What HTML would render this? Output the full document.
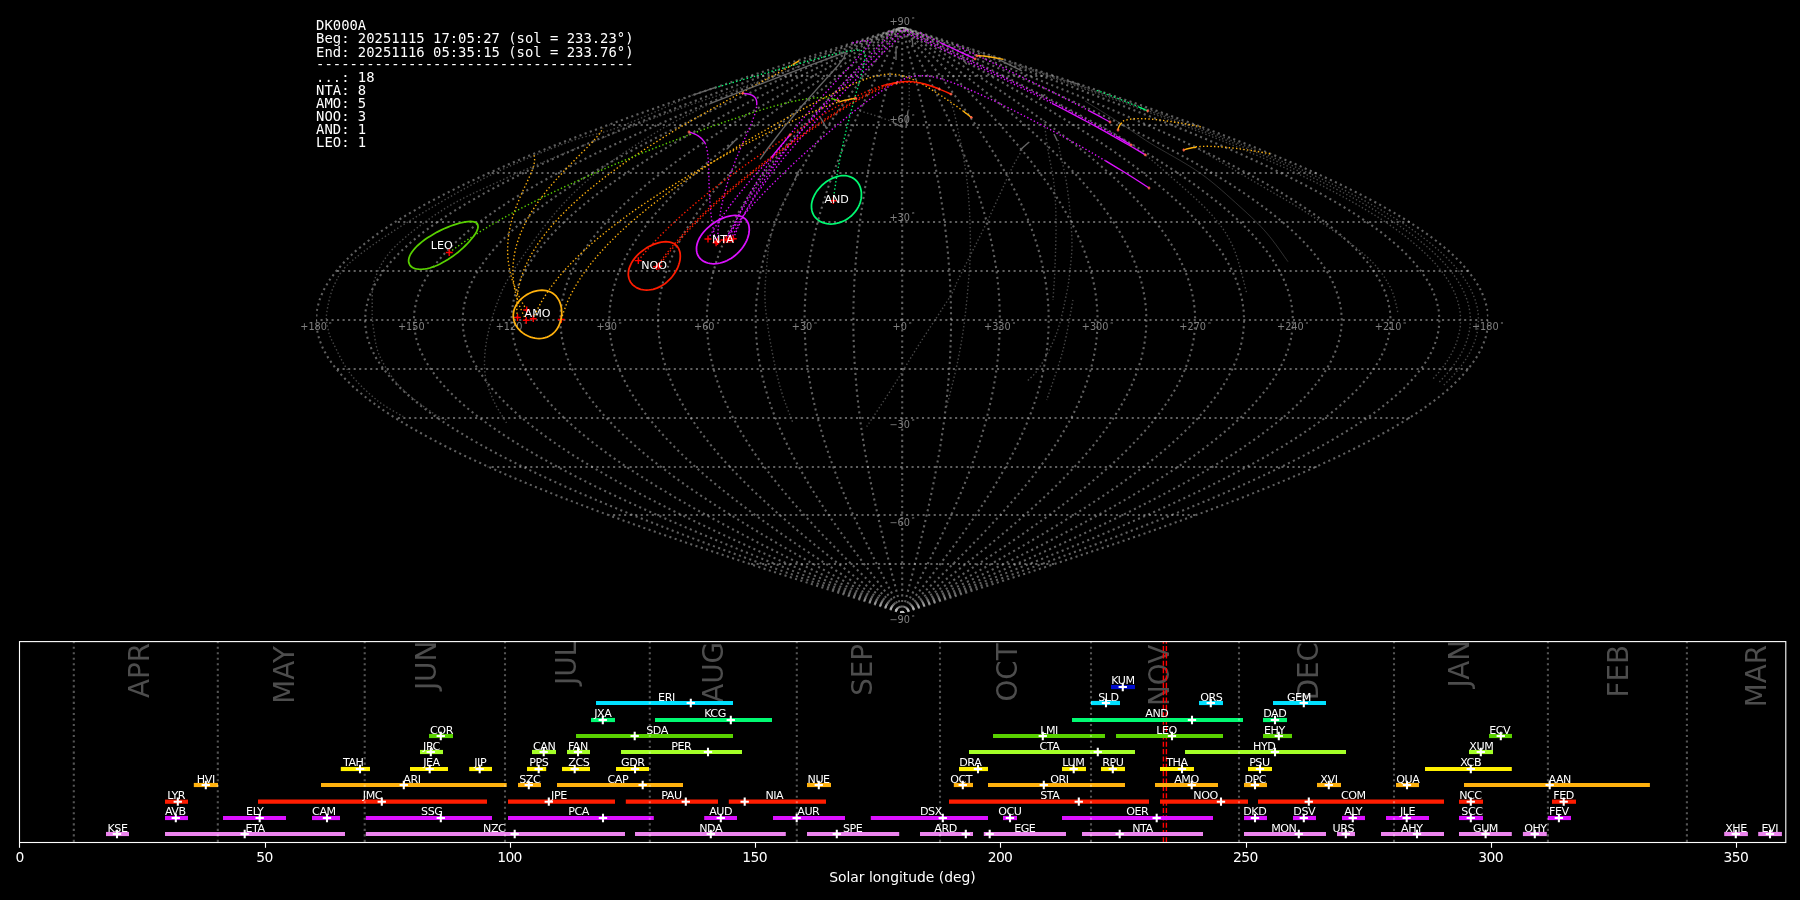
<!DOCTYPE html>
<html><head><meta charset="utf-8"><title>DK000A shower association</title>
<style>html,body{margin:0;padding:0;background:#000;overflow:hidden}svg{display:block;will-change:transform}</style></head>
<body>
<svg width="1800" height="900" viewBox="0 0 1800 900">
<rect width="1800" height="900" fill="#000"/>
<defs><clipPath id="mapclip"><rect x="316.12" y="26.96" width="1172.16" height="586.08"/></clipPath></defs>
<g clip-path="url(#mapclip)">
<g fill="none" stroke="#c0c0c0" stroke-opacity="0.5" stroke-width="2.083" stroke-dasharray="2.083 3.437">
<path d="M902.2,613.0 L871.5,603.3 L840.9,593.5 L810.5,583.7 L780.3,574.0 L750.5,564.2 L721.1,554.4 L692.2,544.7 L663.8,534.9 L636.1,525.1 L609.2,515.4 L583.0,505.6 L557.7,495.8 L533.4,486.1 L510.0,476.3 L487.8,466.5 L466.7,456.8 L446.7,447.0 L428.1,437.2 L410.7,427.4 L394.6,417.7 L380.0,407.9 L366.8,398.1 L355.0,388.4 L344.8,378.6 L336.1,368.8 L328.9,359.1 L323.3,349.3 L319.3,339.5 L316.9,329.8 L316.1,320.0 L316.9,310.2 L319.3,300.5 L323.3,290.7 L328.9,280.9 L336.1,271.2 L344.8,261.4 L355.0,251.6 L366.8,241.9 L380.0,232.1 L394.6,222.3 L410.7,212.6 L428.1,202.8 L446.7,193.0 L466.7,183.2 L487.8,173.5 L510.0,163.7 L533.4,153.9 L557.7,144.2 L583.0,134.4 L609.2,124.6 L636.1,114.9 L663.8,105.1 L692.2,95.3 L721.1,85.6 L750.5,75.8 L780.3,66.0 L810.5,56.3 L840.9,46.5 L871.5,36.7 L902.2,27.0"/>
<path d="M902.2,613.0 L874.1,603.3 L846.0,593.5 L818.2,583.7 L790.5,574.0 L763.2,564.2 L736.2,554.4 L709.7,544.7 L683.7,534.9 L658.3,525.1 L633.6,515.4 L609.6,505.6 L586.4,495.8 L564.1,486.1 L542.7,476.3 L522.3,466.5 L503.0,456.8 L484.7,447.0 L467.6,437.2 L451.6,427.4 L436.9,417.7 L423.5,407.9 L411.4,398.1 L400.6,388.4 L391.3,378.6 L383.3,368.8 L376.7,359.1 L371.6,349.3 L367.9,339.5 L365.7,329.8 L365.0,320.0 L365.7,310.2 L367.9,300.5 L371.6,290.7 L376.7,280.9 L383.3,271.2 L391.3,261.4 L400.6,251.6 L411.4,241.9 L423.5,232.1 L436.9,222.3 L451.6,212.6 L467.6,202.8 L484.7,193.0 L503.0,183.2 L522.3,173.5 L542.7,163.7 L564.1,153.9 L586.4,144.2 L609.6,134.4 L633.6,124.6 L658.3,114.9 L683.7,105.1 L709.7,95.3 L736.2,85.6 L763.2,75.8 L790.5,66.0 L818.2,56.3 L846.0,46.5 L874.1,36.7 L902.2,27.0"/>
<path d="M902.2,613.0 L876.6,603.3 L851.1,593.5 L825.8,583.7 L800.7,574.0 L775.8,564.2 L751.3,554.4 L727.2,544.7 L703.5,534.9 L680.5,525.1 L658.0,515.4 L636.2,505.6 L615.1,495.8 L594.8,486.1 L575.4,476.3 L556.8,466.5 L539.2,456.8 L522.6,447.0 L507.1,437.2 L492.6,427.4 L479.2,417.7 L467.0,407.9 L456.0,398.1 L446.2,388.4 L437.7,378.6 L430.4,368.8 L424.5,359.1 L419.8,349.3 L416.5,339.5 L414.5,329.8 L413.8,320.0 L414.5,310.2 L416.5,300.5 L419.8,290.7 L424.5,280.9 L430.4,271.2 L437.7,261.4 L446.2,251.6 L456.0,241.9 L467.0,232.1 L479.2,222.3 L492.6,212.6 L507.1,202.8 L522.6,193.0 L539.2,183.2 L556.8,173.5 L575.4,163.7 L594.8,153.9 L615.1,144.2 L636.2,134.4 L658.0,124.6 L680.5,114.9 L703.5,105.1 L727.2,95.3 L751.3,85.6 L775.8,75.8 L800.7,66.0 L825.8,56.3 L851.1,46.5 L876.6,36.7 L902.2,27.0"/>
<path d="M902.2,613.0 L879.2,603.3 L856.3,593.5 L833.4,583.7 L810.8,574.0 L788.4,564.2 L766.4,554.4 L744.7,544.7 L723.4,534.9 L702.6,525.1 L682.4,515.4 L662.8,505.6 L643.8,495.8 L625.6,486.1 L608.1,476.3 L591.4,466.5 L575.5,456.8 L560.6,447.0 L546.6,437.2 L533.6,427.4 L521.5,417.7 L510.5,407.9 L500.6,398.1 L491.8,388.4 L484.2,378.6 L477.6,368.8 L472.2,359.1 L468.1,349.3 L465.0,339.5 L463.2,329.8 L462.6,320.0 L463.2,310.2 L465.0,300.5 L468.1,290.7 L472.2,280.9 L477.6,271.2 L484.2,261.4 L491.8,251.6 L500.6,241.9 L510.5,232.1 L521.5,222.3 L533.6,212.6 L546.6,202.8 L560.6,193.0 L575.5,183.2 L591.4,173.5 L608.1,163.7 L625.6,153.9 L643.8,144.2 L662.8,134.4 L682.4,124.6 L702.6,114.9 L723.4,105.1 L744.7,95.3 L766.4,85.6 L788.4,75.8 L810.8,66.0 L833.4,56.3 L856.3,46.5 L879.2,36.7 L902.2,27.0"/>
<path d="M902.2,613.0 L881.8,603.3 L861.4,593.5 L841.1,583.7 L821.0,574.0 L801.1,564.2 L781.5,554.4 L762.2,544.7 L743.3,534.9 L724.8,525.1 L706.8,515.4 L689.4,505.6 L672.5,495.8 L656.3,486.1 L640.8,476.3 L625.9,466.5 L611.8,456.8 L598.6,447.0 L586.1,437.2 L574.5,427.4 L563.8,417.7 L554.1,407.9 L545.3,398.1 L537.4,388.4 L530.6,378.6 L524.8,368.8 L520.0,359.1 L516.3,349.3 L513.6,339.5 L512.0,329.8 L511.5,320.0 L512.0,310.2 L513.6,300.5 L516.3,290.7 L520.0,280.9 L524.8,271.2 L530.6,261.4 L537.4,251.6 L545.3,241.9 L554.1,232.1 L563.8,222.3 L574.5,212.6 L586.1,202.8 L598.6,193.0 L611.8,183.2 L625.9,173.5 L640.8,163.7 L656.3,153.9 L672.5,144.2 L689.4,134.4 L706.8,124.6 L724.8,114.9 L743.3,105.1 L762.2,95.3 L781.5,85.6 L801.1,75.8 L821.0,66.0 L841.1,56.3 L861.4,46.5 L881.8,36.7 L902.2,27.0"/>
<path d="M902.2,613.0 L884.3,603.3 L866.5,593.5 L848.7,583.7 L831.1,574.0 L813.7,564.2 L796.6,554.4 L779.7,544.7 L763.1,534.9 L747.0,525.1 L731.3,515.4 L716.0,505.6 L701.2,495.8 L687.0,486.1 L673.4,476.3 L660.5,466.5 L648.1,456.8 L636.5,447.0 L625.6,437.2 L615.5,427.4 L606.1,417.7 L597.6,407.9 L589.9,398.1 L583.0,388.4 L577.1,378.6 L572.0,368.8 L567.8,359.1 L564.5,349.3 L562.2,339.5 L560.8,329.8 L560.3,320.0 L560.8,310.2 L562.2,300.5 L564.5,290.7 L567.8,280.9 L572.0,271.2 L577.1,261.4 L583.0,251.6 L589.9,241.9 L597.6,232.1 L606.1,222.3 L615.5,212.6 L625.6,202.8 L636.5,193.0 L648.1,183.2 L660.5,173.5 L673.4,163.7 L687.0,153.9 L701.2,144.2 L716.0,134.4 L731.3,124.6 L747.0,114.9 L763.1,105.1 L779.7,95.3 L796.6,85.6 L813.7,75.8 L831.1,66.0 L848.7,56.3 L866.5,46.5 L884.3,36.7 L902.2,27.0"/>
<path d="M902.2,613.0 L886.9,603.3 L871.6,593.5 L856.4,583.7 L841.3,574.0 L826.4,564.2 L811.6,554.4 L797.2,544.7 L783.0,534.9 L769.2,525.1 L755.7,515.4 L742.6,505.6 L730.0,495.8 L717.8,486.1 L706.1,476.3 L695.0,466.5 L684.4,456.8 L674.5,447.0 L665.1,437.2 L656.4,427.4 L648.4,417.7 L641.1,407.9 L634.5,398.1 L628.6,388.4 L623.5,378.6 L619.1,368.8 L615.6,359.1 L612.8,349.3 L610.8,339.5 L609.6,329.8 L609.2,320.0 L609.6,310.2 L610.8,300.5 L612.8,290.7 L615.6,280.9 L619.1,271.2 L623.5,261.4 L628.6,251.6 L634.5,241.9 L641.1,232.1 L648.4,222.3 L656.4,212.6 L665.1,202.8 L674.5,193.0 L684.4,183.2 L695.0,173.5 L706.1,163.7 L717.8,153.9 L730.0,144.2 L742.6,134.4 L755.7,124.6 L769.2,114.9 L783.0,105.1 L797.2,95.3 L811.6,85.6 L826.4,75.8 L841.3,66.0 L856.4,56.3 L871.6,46.5 L886.9,36.7 L902.2,27.0"/>
<path d="M902.2,613.0 L889.4,603.3 L876.7,593.5 L864.0,583.7 L851.4,574.0 L839.0,564.2 L826.7,554.4 L814.7,544.7 L802.9,534.9 L791.3,525.1 L780.1,515.4 L769.2,505.6 L758.7,495.8 L748.5,486.1 L738.8,476.3 L729.5,466.5 L720.7,456.8 L712.4,447.0 L704.6,437.2 L697.4,427.4 L690.7,417.7 L684.6,407.9 L679.1,398.1 L674.2,388.4 L670.0,378.6 L666.3,368.8 L663.3,359.1 L661.0,349.3 L659.3,339.5 L658.3,329.8 L658.0,320.0 L658.3,310.2 L659.3,300.5 L661.0,290.7 L663.3,280.9 L666.3,271.2 L670.0,261.4 L674.2,251.6 L679.1,241.9 L684.6,232.1 L690.7,222.3 L697.4,212.6 L704.6,202.8 L712.4,193.0 L720.7,183.2 L729.5,173.5 L738.8,163.7 L748.5,153.9 L758.7,144.2 L769.2,134.4 L780.1,124.6 L791.3,114.9 L802.9,105.1 L814.7,95.3 L826.7,85.6 L839.0,75.8 L851.4,66.0 L864.0,56.3 L876.7,46.5 L889.4,36.7 L902.2,27.0"/>
<path d="M902.2,613.0 L892.0,603.3 L881.8,593.5 L871.6,583.7 L861.6,574.0 L851.6,564.2 L841.8,554.4 L832.2,544.7 L822.7,534.9 L813.5,525.1 L804.5,515.4 L795.8,505.6 L787.4,495.8 L779.3,486.1 L771.5,476.3 L764.1,466.5 L757.0,456.8 L750.4,447.0 L744.2,437.2 L738.4,427.4 L733.0,417.7 L728.1,407.9 L723.7,398.1 L719.8,388.4 L716.4,378.6 L713.5,368.8 L711.1,359.1 L709.2,349.3 L707.9,339.5 L707.1,329.8 L706.8,320.0 L707.1,310.2 L707.9,300.5 L709.2,290.7 L711.1,280.9 L713.5,271.2 L716.4,261.4 L719.8,251.6 L723.7,241.9 L728.1,232.1 L733.0,222.3 L738.4,212.6 L744.2,202.8 L750.4,193.0 L757.0,183.2 L764.1,173.5 L771.5,163.7 L779.3,153.9 L787.4,144.2 L795.8,134.4 L804.5,124.6 L813.5,114.9 L822.7,105.1 L832.2,95.3 L841.8,85.6 L851.6,75.8 L861.6,66.0 L871.6,56.3 L881.8,46.5 L892.0,36.7 L902.2,27.0"/>
<path d="M902.2,613.0 L894.5,603.3 L886.9,593.5 L879.3,583.7 L871.7,574.0 L864.3,564.2 L856.9,554.4 L849.7,544.7 L842.6,534.9 L835.7,525.1 L828.9,515.4 L822.4,505.6 L816.1,495.8 L810.0,486.1 L804.2,476.3 L798.6,466.5 L793.3,456.8 L788.3,447.0 L783.7,437.2 L779.3,427.4 L775.3,417.7 L771.6,407.9 L768.3,398.1 L765.4,388.4 L762.9,378.6 L760.7,368.8 L758.9,359.1 L757.5,349.3 L756.5,339.5 L755.9,329.8 L755.7,320.0 L755.9,310.2 L756.5,300.5 L757.5,290.7 L758.9,280.9 L760.7,271.2 L762.9,261.4 L765.4,251.6 L768.3,241.9 L771.6,232.1 L775.3,222.3 L779.3,212.6 L783.7,202.8 L788.3,193.0 L793.3,183.2 L798.6,173.5 L804.2,163.7 L810.0,153.9 L816.1,144.2 L822.4,134.4 L828.9,124.6 L835.7,114.9 L842.6,105.1 L849.7,95.3 L856.9,85.6 L864.3,75.8 L871.7,66.0 L879.3,56.3 L886.9,46.5 L894.5,36.7 L902.2,27.0"/>
<path d="M902.2,613.0 L897.1,603.3 L892.0,593.5 L886.9,583.7 L881.9,574.0 L876.9,564.2 L872.0,554.4 L867.2,544.7 L862.5,534.9 L857.9,525.1 L853.4,515.4 L849.0,505.6 L844.8,495.8 L840.7,486.1 L836.8,476.3 L833.1,466.5 L829.6,456.8 L826.3,447.0 L823.2,437.2 L820.3,427.4 L817.6,417.7 L815.2,407.9 L813.0,398.1 L811.0,388.4 L809.3,378.6 L807.8,368.8 L806.7,359.1 L805.7,349.3 L805.1,339.5 L804.7,329.8 L804.5,320.0 L804.7,310.2 L805.1,300.5 L805.7,290.7 L806.7,280.9 L807.8,271.2 L809.3,261.4 L811.0,251.6 L813.0,241.9 L815.2,232.1 L817.6,222.3 L820.3,212.6 L823.2,202.8 L826.3,193.0 L829.6,183.2 L833.1,173.5 L836.8,163.7 L840.7,153.9 L844.8,144.2 L849.0,134.4 L853.4,124.6 L857.9,114.9 L862.5,105.1 L867.2,95.3 L872.0,85.6 L876.9,75.8 L881.9,66.0 L886.9,56.3 L892.0,46.5 L897.1,36.7 L902.2,27.0"/>
<path d="M902.2,613.0 L899.6,603.3 L897.1,593.5 L894.6,583.7 L892.0,574.0 L889.6,564.2 L887.1,554.4 L884.7,544.7 L882.3,534.9 L880.0,525.1 L877.8,515.4 L875.6,505.6 L873.5,495.8 L871.5,486.1 L869.5,476.3 L867.7,466.5 L865.9,456.8 L864.2,447.0 L862.7,437.2 L861.2,427.4 L859.9,417.7 L858.7,407.9 L857.6,398.1 L856.6,388.4 L855.8,378.6 L855.0,368.8 L854.4,359.1 L854.0,349.3 L853.6,339.5 L853.4,329.8 L853.4,320.0 L853.4,310.2 L853.6,300.5 L854.0,290.7 L854.4,280.9 L855.0,271.2 L855.8,261.4 L856.6,251.6 L857.6,241.9 L858.7,232.1 L859.9,222.3 L861.2,212.6 L862.7,202.8 L864.2,193.0 L865.9,183.2 L867.7,173.5 L869.5,163.7 L871.5,153.9 L873.5,144.2 L875.6,134.4 L877.8,124.6 L880.0,114.9 L882.3,105.1 L884.7,95.3 L887.1,85.6 L889.6,75.8 L892.0,66.0 L894.6,56.3 L897.1,46.5 L899.6,36.7 L902.2,27.0"/>
<path d="M902.2,613.0 L902.2,603.3 L902.2,593.5 L902.2,583.7 L902.2,574.0 L902.2,564.2 L902.2,554.4 L902.2,544.7 L902.2,534.9 L902.2,525.1 L902.2,515.4 L902.2,505.6 L902.2,495.8 L902.2,486.1 L902.2,476.3 L902.2,466.5 L902.2,456.8 L902.2,447.0 L902.2,437.2 L902.2,427.4 L902.2,417.7 L902.2,407.9 L902.2,398.1 L902.2,388.4 L902.2,378.6 L902.2,368.8 L902.2,359.1 L902.2,349.3 L902.2,339.5 L902.2,329.8 L902.2,320.0 L902.2,310.2 L902.2,300.5 L902.2,290.7 L902.2,280.9 L902.2,271.2 L902.2,261.4 L902.2,251.6 L902.2,241.9 L902.2,232.1 L902.2,222.3 L902.2,212.6 L902.2,202.8 L902.2,193.0 L902.2,183.2 L902.2,173.5 L902.2,163.7 L902.2,153.9 L902.2,144.2 L902.2,134.4 L902.2,124.6 L902.2,114.9 L902.2,105.1 L902.2,95.3 L902.2,85.6 L902.2,75.8 L902.2,66.0 L902.2,56.3 L902.2,46.5 L902.2,36.7 L902.2,27.0"/>
<path d="M902.2,613.0 L904.8,603.3 L907.3,593.5 L909.8,583.7 L912.4,574.0 L914.8,564.2 L917.3,554.4 L919.7,544.7 L922.1,534.9 L924.4,525.1 L926.6,515.4 L928.8,505.6 L930.9,495.8 L932.9,486.1 L934.9,476.3 L936.7,466.5 L938.5,456.8 L940.2,447.0 L941.7,437.2 L943.2,427.4 L944.5,417.7 L945.7,407.9 L946.8,398.1 L947.8,388.4 L948.6,378.6 L949.4,368.8 L950.0,359.1 L950.4,349.3 L950.8,339.5 L951.0,329.8 L951.0,320.0 L951.0,310.2 L950.8,300.5 L950.4,290.7 L950.0,280.9 L949.4,271.2 L948.6,261.4 L947.8,251.6 L946.8,241.9 L945.7,232.1 L944.5,222.3 L943.2,212.6 L941.7,202.8 L940.2,193.0 L938.5,183.2 L936.7,173.5 L934.9,163.7 L932.9,153.9 L930.9,144.2 L928.8,134.4 L926.6,124.6 L924.4,114.9 L922.1,105.1 L919.7,95.3 L917.3,85.6 L914.8,75.8 L912.4,66.0 L909.8,56.3 L907.3,46.5 L904.8,36.7 L902.2,27.0"/>
<path d="M902.2,613.0 L907.3,603.3 L912.4,593.5 L917.5,583.7 L922.5,574.0 L927.5,564.2 L932.4,554.4 L937.2,544.7 L941.9,534.9 L946.5,525.1 L951.0,515.4 L955.4,505.6 L959.6,495.8 L963.7,486.1 L967.6,476.3 L971.3,466.5 L974.8,456.8 L978.1,447.0 L981.2,437.2 L984.1,427.4 L986.8,417.7 L989.2,407.9 L991.4,398.1 L993.4,388.4 L995.1,378.6 L996.6,368.8 L997.7,359.1 L998.7,349.3 L999.3,339.5 L999.7,329.8 L999.9,320.0 L999.7,310.2 L999.3,300.5 L998.7,290.7 L997.7,280.9 L996.6,271.2 L995.1,261.4 L993.4,251.6 L991.4,241.9 L989.2,232.1 L986.8,222.3 L984.1,212.6 L981.2,202.8 L978.1,193.0 L974.8,183.2 L971.3,173.5 L967.6,163.7 L963.7,153.9 L959.6,144.2 L955.4,134.4 L951.0,124.6 L946.5,114.9 L941.9,105.1 L937.2,95.3 L932.4,85.6 L927.5,75.8 L922.5,66.0 L917.5,56.3 L912.4,46.5 L907.3,36.7 L902.2,27.0"/>
<path d="M902.2,613.0 L909.9,603.3 L917.5,593.5 L925.1,583.7 L932.7,574.0 L940.1,564.2 L947.5,554.4 L954.7,544.7 L961.8,534.9 L968.7,525.1 L975.5,515.4 L982.0,505.6 L988.3,495.8 L994.4,486.1 L1000.2,476.3 L1005.8,466.5 L1011.1,456.8 L1016.1,447.0 L1020.7,437.2 L1025.1,427.4 L1029.1,417.7 L1032.8,407.9 L1036.1,398.1 L1039.0,388.4 L1041.5,378.6 L1043.7,368.8 L1045.5,359.1 L1046.9,349.3 L1047.9,339.5 L1048.5,329.8 L1048.7,320.0 L1048.5,310.2 L1047.9,300.5 L1046.9,290.7 L1045.5,280.9 L1043.7,271.2 L1041.5,261.4 L1039.0,251.6 L1036.1,241.9 L1032.8,232.1 L1029.1,222.3 L1025.1,212.6 L1020.7,202.8 L1016.1,193.0 L1011.1,183.2 L1005.8,173.5 L1000.2,163.7 L994.4,153.9 L988.3,144.2 L982.0,134.4 L975.5,124.6 L968.7,114.9 L961.8,105.1 L954.7,95.3 L947.5,85.6 L940.1,75.8 L932.7,66.0 L925.1,56.3 L917.5,46.5 L909.9,36.7 L902.2,27.0"/>
<path d="M902.2,613.0 L912.4,603.3 L922.6,593.5 L932.8,583.7 L942.8,574.0 L952.8,564.2 L962.6,554.4 L972.2,544.7 L981.7,534.9 L990.9,525.1 L999.9,515.4 L1008.6,505.6 L1017.0,495.8 L1025.1,486.1 L1032.9,476.3 L1040.3,466.5 L1047.4,456.8 L1054.0,447.0 L1060.2,437.2 L1066.0,427.4 L1071.4,417.7 L1076.3,407.9 L1080.7,398.1 L1084.6,388.4 L1088.0,378.6 L1090.9,368.8 L1093.3,359.1 L1095.2,349.3 L1096.5,339.5 L1097.3,329.8 L1097.6,320.0 L1097.3,310.2 L1096.5,300.5 L1095.2,290.7 L1093.3,280.9 L1090.9,271.2 L1088.0,261.4 L1084.6,251.6 L1080.7,241.9 L1076.3,232.1 L1071.4,222.3 L1066.0,212.6 L1060.2,202.8 L1054.0,193.0 L1047.4,183.2 L1040.3,173.5 L1032.9,163.7 L1025.1,153.9 L1017.0,144.2 L1008.6,134.4 L999.9,124.6 L990.9,114.9 L981.7,105.1 L972.2,95.3 L962.6,85.6 L952.8,75.8 L942.8,66.0 L932.8,56.3 L922.6,46.5 L912.4,36.7 L902.2,27.0"/>
<path d="M902.2,613.0 L915.0,603.3 L927.7,593.5 L940.4,583.7 L953.0,574.0 L965.4,564.2 L977.7,554.4 L989.7,544.7 L1001.5,534.9 L1013.1,525.1 L1024.3,515.4 L1035.2,505.6 L1045.7,495.8 L1055.9,486.1 L1065.6,476.3 L1074.9,466.5 L1083.7,456.8 L1092.0,447.0 L1099.8,437.2 L1107.0,427.4 L1113.7,417.7 L1119.8,407.9 L1125.3,398.1 L1130.2,388.4 L1134.4,378.6 L1138.1,368.8 L1141.1,359.1 L1143.4,349.3 L1145.1,339.5 L1146.1,329.8 L1146.4,320.0 L1146.1,310.2 L1145.1,300.5 L1143.4,290.7 L1141.1,280.9 L1138.1,271.2 L1134.4,261.4 L1130.2,251.6 L1125.3,241.9 L1119.8,232.1 L1113.7,222.3 L1107.0,212.6 L1099.8,202.8 L1092.0,193.0 L1083.7,183.2 L1074.9,173.5 L1065.6,163.7 L1055.9,153.9 L1045.7,144.2 L1035.2,134.4 L1024.3,124.6 L1013.1,114.9 L1001.5,105.1 L989.7,95.3 L977.7,85.6 L965.4,75.8 L953.0,66.0 L940.4,56.3 L927.7,46.5 L915.0,36.7 L902.2,27.0"/>
<path d="M902.2,613.0 L917.5,603.3 L932.8,593.5 L948.0,583.7 L963.1,574.0 L978.0,564.2 L992.8,554.4 L1007.2,544.7 L1021.4,534.9 L1035.2,525.1 L1048.7,515.4 L1061.8,505.6 L1074.4,495.8 L1086.6,486.1 L1098.3,476.3 L1109.4,466.5 L1120.0,456.8 L1129.9,447.0 L1139.3,437.2 L1148.0,427.4 L1156.0,417.7 L1163.3,407.9 L1169.9,398.1 L1175.8,388.4 L1180.9,378.6 L1185.3,368.8 L1188.8,359.1 L1191.6,349.3 L1193.6,339.5 L1194.8,329.8 L1195.2,320.0 L1194.8,310.2 L1193.6,300.5 L1191.6,290.7 L1188.8,280.9 L1185.3,271.2 L1180.9,261.4 L1175.8,251.6 L1169.9,241.9 L1163.3,232.1 L1156.0,222.3 L1148.0,212.6 L1139.3,202.8 L1129.9,193.0 L1120.0,183.2 L1109.4,173.5 L1098.3,163.7 L1086.6,153.9 L1074.4,144.2 L1061.8,134.4 L1048.7,124.6 L1035.2,114.9 L1021.4,105.1 L1007.2,95.3 L992.8,85.6 L978.0,75.8 L963.1,66.0 L948.0,56.3 L932.8,46.5 L917.5,36.7 L902.2,27.0"/>
<path d="M902.2,613.0 L920.1,603.3 L937.9,593.5 L955.7,583.7 L973.3,574.0 L990.7,564.2 L1007.8,554.4 L1024.7,544.7 L1041.3,534.9 L1057.4,525.1 L1073.1,515.4 L1088.4,505.6 L1103.2,495.8 L1117.4,486.1 L1131.0,476.3 L1143.9,466.5 L1156.3,456.8 L1167.9,447.0 L1178.8,437.2 L1188.9,427.4 L1198.3,417.7 L1206.8,407.9 L1214.5,398.1 L1221.4,388.4 L1227.3,378.6 L1232.4,368.8 L1236.6,359.1 L1239.9,349.3 L1242.2,339.5 L1243.6,329.8 L1244.1,320.0 L1243.6,310.2 L1242.2,300.5 L1239.9,290.7 L1236.6,280.9 L1232.4,271.2 L1227.3,261.4 L1221.4,251.6 L1214.5,241.9 L1206.8,232.1 L1198.3,222.3 L1188.9,212.6 L1178.8,202.8 L1167.9,193.0 L1156.3,183.2 L1143.9,173.5 L1131.0,163.7 L1117.4,153.9 L1103.2,144.2 L1088.4,134.4 L1073.1,124.6 L1057.4,114.9 L1041.3,105.1 L1024.7,95.3 L1007.8,85.6 L990.7,75.8 L973.3,66.0 L955.7,56.3 L937.9,46.5 L920.1,36.7 L902.2,27.0"/>
<path d="M902.2,613.0 L922.6,603.3 L943.0,593.5 L963.3,583.7 L983.4,574.0 L1003.3,564.2 L1022.9,554.4 L1042.2,544.7 L1061.1,534.9 L1079.6,525.1 L1097.6,515.4 L1115.0,505.6 L1131.9,495.8 L1148.1,486.1 L1163.6,476.3 L1178.5,466.5 L1192.6,456.8 L1205.8,447.0 L1218.3,437.2 L1229.9,427.4 L1240.6,417.7 L1250.3,407.9 L1259.1,398.1 L1267.0,388.4 L1273.8,378.6 L1279.6,368.8 L1284.4,359.1 L1288.1,349.3 L1290.8,339.5 L1292.4,329.8 L1292.9,320.0 L1292.4,310.2 L1290.8,300.5 L1288.1,290.7 L1284.4,280.9 L1279.6,271.2 L1273.8,261.4 L1267.0,251.6 L1259.1,241.9 L1250.3,232.1 L1240.6,222.3 L1229.9,212.6 L1218.3,202.8 L1205.8,193.0 L1192.6,183.2 L1178.5,173.5 L1163.6,163.7 L1148.1,153.9 L1131.9,144.2 L1115.0,134.4 L1097.6,124.6 L1079.6,114.9 L1061.1,105.1 L1042.2,95.3 L1022.9,85.6 L1003.3,75.8 L983.4,66.0 L963.3,56.3 L943.0,46.5 L922.6,36.7 L902.2,27.0"/>
<path d="M902.2,613.0 L925.2,603.3 L948.1,593.5 L971.0,583.7 L993.6,574.0 L1016.0,564.2 L1038.0,554.4 L1059.7,544.7 L1081.0,534.9 L1101.8,525.1 L1122.0,515.4 L1141.6,505.6 L1160.6,495.8 L1178.8,486.1 L1196.3,476.3 L1213.0,466.5 L1228.9,456.8 L1243.8,447.0 L1257.8,437.2 L1270.8,427.4 L1282.9,417.7 L1293.9,407.9 L1303.8,398.1 L1312.6,388.4 L1320.2,378.6 L1326.8,368.8 L1332.2,359.1 L1336.3,349.3 L1339.4,339.5 L1341.2,329.8 L1341.8,320.0 L1341.2,310.2 L1339.4,300.5 L1336.3,290.7 L1332.2,280.9 L1326.8,271.2 L1320.2,261.4 L1312.6,251.6 L1303.8,241.9 L1293.9,232.1 L1282.9,222.3 L1270.8,212.6 L1257.8,202.8 L1243.8,193.0 L1228.9,183.2 L1213.0,173.5 L1196.3,163.7 L1178.8,153.9 L1160.6,144.2 L1141.6,134.4 L1122.0,124.6 L1101.8,114.9 L1081.0,105.1 L1059.7,95.3 L1038.0,85.6 L1016.0,75.8 L993.6,66.0 L971.0,56.3 L948.1,46.5 L925.2,36.7 L902.2,27.0"/>
<path d="M902.2,613.0 L927.8,603.3 L953.3,593.5 L978.6,583.7 L1003.7,574.0 L1028.6,564.2 L1053.1,554.4 L1077.2,544.7 L1100.9,534.9 L1123.9,525.1 L1146.4,515.4 L1168.2,505.6 L1189.3,495.8 L1209.6,486.1 L1229.0,476.3 L1247.6,466.5 L1265.2,456.8 L1281.8,447.0 L1297.3,437.2 L1311.8,427.4 L1325.2,417.7 L1337.4,407.9 L1348.4,398.1 L1358.2,388.4 L1366.7,378.6 L1374.0,368.8 L1379.9,359.1 L1384.6,349.3 L1387.9,339.5 L1389.9,329.8 L1390.6,320.0 L1389.9,310.2 L1387.9,300.5 L1384.6,290.7 L1379.9,280.9 L1374.0,271.2 L1366.7,261.4 L1358.2,251.6 L1348.4,241.9 L1337.4,232.1 L1325.2,222.3 L1311.8,212.6 L1297.3,202.8 L1281.8,193.0 L1265.2,183.2 L1247.6,173.5 L1229.0,163.7 L1209.6,153.9 L1189.3,144.2 L1168.2,134.4 L1146.4,124.6 L1123.9,114.9 L1100.9,105.1 L1077.2,95.3 L1053.1,85.6 L1028.6,75.8 L1003.7,66.0 L978.6,56.3 L953.3,46.5 L927.8,36.7 L902.2,27.0"/>
<path d="M902.2,613.0 L930.3,603.3 L958.4,593.5 L986.2,583.7 L1013.9,574.0 L1041.2,564.2 L1068.2,554.4 L1094.7,544.7 L1120.7,534.9 L1146.1,525.1 L1170.8,515.4 L1194.8,505.6 L1218.0,495.8 L1240.3,486.1 L1261.7,476.3 L1282.1,466.5 L1301.4,456.8 L1319.7,447.0 L1336.8,437.2 L1352.8,427.4 L1367.5,417.7 L1380.9,407.9 L1393.0,398.1 L1403.8,388.4 L1413.1,378.6 L1421.1,368.8 L1427.7,359.1 L1432.8,349.3 L1436.5,339.5 L1438.7,329.8 L1439.4,320.0 L1438.7,310.2 L1436.5,300.5 L1432.8,290.7 L1427.7,280.9 L1421.1,271.2 L1413.1,261.4 L1403.8,251.6 L1393.0,241.9 L1380.9,232.1 L1367.5,222.3 L1352.8,212.6 L1336.8,202.8 L1319.7,193.0 L1301.4,183.2 L1282.1,173.5 L1261.7,163.7 L1240.3,153.9 L1218.0,144.2 L1194.8,134.4 L1170.8,124.6 L1146.1,114.9 L1120.7,105.1 L1094.7,95.3 L1068.2,85.6 L1041.2,75.8 L1013.9,66.0 L986.2,56.3 L958.4,46.5 L930.3,36.7 L902.2,27.0"/>
<path d="M902.2,613.0 L932.9,603.3 L963.5,593.5 L993.9,583.7 L1024.1,574.0 L1053.9,564.2 L1083.3,554.4 L1112.2,544.7 L1140.6,534.9 L1168.3,525.1 L1195.2,515.4 L1221.4,505.6 L1246.7,495.8 L1271.0,486.1 L1294.4,476.3 L1316.6,466.5 L1337.7,456.8 L1357.7,447.0 L1376.3,437.2 L1393.7,427.4 L1409.8,417.7 L1424.4,407.9 L1437.6,398.1 L1449.4,388.4 L1459.6,378.6 L1468.3,368.8 L1475.5,359.1 L1481.1,349.3 L1485.1,339.5 L1487.5,329.8 L1488.3,320.0 L1487.5,310.2 L1485.1,300.5 L1481.1,290.7 L1475.5,280.9 L1468.3,271.2 L1459.6,261.4 L1449.4,251.6 L1437.6,241.9 L1424.4,232.1 L1409.8,222.3 L1393.7,212.6 L1376.3,202.8 L1357.7,193.0 L1337.7,183.2 L1316.6,173.5 L1294.4,163.7 L1271.0,153.9 L1246.7,144.2 L1221.4,134.4 L1195.2,124.6 L1168.3,114.9 L1140.6,105.1 L1112.2,95.3 L1083.3,85.6 L1053.9,75.8 L1024.1,66.0 L993.9,56.3 L963.5,46.5 L932.9,36.7 L902.2,27.0"/>
<path d="M902.2,613.0 L902.2,613.0 L902.2,613.0 L902.2,613.0 L902.2,613.0 L902.2,613.0 L902.2,613.0 L902.2,613.0 L902.2,613.0 L902.2,613.0 L902.2,613.0 L902.2,613.0 L902.2,613.0"/>
<path d="M902.2,613.0 L902.2,613.0 L902.2,613.0 L902.2,613.0 L902.2,613.0 L902.2,613.0 L902.2,613.0 L902.2,613.0 L902.2,613.0 L902.2,613.0 L902.2,613.0 L902.2,613.0 L902.2,613.0"/>
<path d="M902.2,564.0 L889.6,564.0 L876.9,564.0 L864.3,564.0 L851.6,564.0 L839.0,564.0 L826.4,564.0 L813.7,564.0 L801.1,564.0 L788.4,564.0 L775.8,564.0 L763.2,564.0 L750.5,564.0"/>
<path d="M1053.9,564.0 L1041.2,564.0 L1028.6,564.0 L1016.0,564.0 L1003.3,564.0 L990.7,564.0 L978.0,564.0 L965.4,564.0 L952.8,564.0 L940.1,564.0 L927.5,564.0 L914.8,564.0 L902.2,564.0"/>
<path d="M902.2,515.0 L877.8,515.0 L853.4,515.0 L828.9,515.0 L804.5,515.0 L780.1,515.0 L755.7,515.0 L731.3,515.0 L706.8,515.0 L682.4,515.0 L658.0,515.0 L633.6,515.0 L609.2,515.0"/>
<path d="M1195.2,515.0 L1170.8,515.0 L1146.4,515.0 L1122.0,515.0 L1097.6,515.0 L1073.1,515.0 L1048.7,515.0 L1024.3,515.0 L999.9,515.0 L975.5,515.0 L951.0,515.0 L926.6,515.0 L902.2,515.0"/>
<path d="M902.2,467.0 L867.7,467.0 L833.1,467.0 L798.6,467.0 L764.1,467.0 L729.5,467.0 L695.0,467.0 L660.5,467.0 L625.9,467.0 L591.4,467.0 L556.8,467.0 L522.3,467.0 L487.8,467.0"/>
<path d="M1316.6,467.0 L1282.1,467.0 L1247.6,467.0 L1213.0,467.0 L1178.5,467.0 L1143.9,467.0 L1109.4,467.0 L1074.9,467.0 L1040.3,467.0 L1005.8,467.0 L971.3,467.0 L936.7,467.0 L902.2,467.0"/>
<path d="M902.2,418.0 L859.9,418.0 L817.6,418.0 L775.3,418.0 L733.0,418.0 L690.7,418.0 L648.4,418.0 L606.1,418.0 L563.8,418.0 L521.5,418.0 L479.2,418.0 L436.9,418.0 L394.6,418.0"/>
<path d="M1409.8,418.0 L1367.5,418.0 L1325.2,418.0 L1282.9,418.0 L1240.6,418.0 L1198.3,418.0 L1156.0,418.0 L1113.7,418.0 L1071.4,418.0 L1029.1,418.0 L986.8,418.0 L944.5,418.0 L902.2,418.0"/>
<path d="M902.2,369.0 L855.0,369.0 L807.8,369.0 L760.7,369.0 L713.5,369.0 L666.3,369.0 L619.1,369.0 L572.0,369.0 L524.8,369.0 L477.6,369.0 L430.4,369.0 L383.3,369.0 L336.1,369.0"/>
<path d="M1468.3,369.0 L1421.1,369.0 L1374.0,369.0 L1326.8,369.0 L1279.6,369.0 L1232.4,369.0 L1185.3,369.0 L1138.1,369.0 L1090.9,369.0 L1043.7,369.0 L996.6,369.0 L949.4,369.0 L902.2,369.0"/>
<path d="M902.2,320.0 L853.4,320.0 L804.5,320.0 L755.7,320.0 L706.8,320.0 L658.0,320.0 L609.2,320.0 L560.3,320.0 L511.5,320.0 L462.6,320.0 L413.8,320.0 L365.0,320.0 L316.1,320.0"/>
<path d="M1488.3,320.0 L1439.4,320.0 L1390.6,320.0 L1341.8,320.0 L1292.9,320.0 L1244.1,320.0 L1195.2,320.0 L1146.4,320.0 L1097.6,320.0 L1048.7,320.0 L999.9,320.0 L951.0,320.0 L902.2,320.0"/>
<path d="M902.2,271.0 L855.0,271.0 L807.8,271.0 L760.7,271.0 L713.5,271.0 L666.3,271.0 L619.1,271.0 L572.0,271.0 L524.8,271.0 L477.6,271.0 L430.4,271.0 L383.3,271.0 L336.1,271.0"/>
<path d="M1468.3,271.0 L1421.1,271.0 L1374.0,271.0 L1326.8,271.0 L1279.6,271.0 L1232.4,271.0 L1185.3,271.0 L1138.1,271.0 L1090.9,271.0 L1043.7,271.0 L996.6,271.0 L949.4,271.0 L902.2,271.0"/>
<path d="M902.2,222.0 L859.9,222.0 L817.6,222.0 L775.3,222.0 L733.0,222.0 L690.7,222.0 L648.4,222.0 L606.1,222.0 L563.8,222.0 L521.5,222.0 L479.2,222.0 L436.9,222.0 L394.6,222.0"/>
<path d="M1409.8,222.0 L1367.5,222.0 L1325.2,222.0 L1282.9,222.0 L1240.6,222.0 L1198.3,222.0 L1156.0,222.0 L1113.7,222.0 L1071.4,222.0 L1029.1,222.0 L986.8,222.0 L944.5,222.0 L902.2,222.0"/>
<path d="M902.2,173.0 L867.7,173.0 L833.1,173.0 L798.6,173.0 L764.1,173.0 L729.5,173.0 L695.0,173.0 L660.5,173.0 L625.9,173.0 L591.4,173.0 L556.8,173.0 L522.3,173.0 L487.8,173.0"/>
<path d="M1316.6,173.0 L1282.1,173.0 L1247.6,173.0 L1213.0,173.0 L1178.5,173.0 L1143.9,173.0 L1109.4,173.0 L1074.9,173.0 L1040.3,173.0 L1005.8,173.0 L971.3,173.0 L936.7,173.0 L902.2,173.0"/>
<path d="M902.2,125.0 L877.8,125.0 L853.4,125.0 L828.9,125.0 L804.5,125.0 L780.1,125.0 L755.7,125.0 L731.3,125.0 L706.8,125.0 L682.4,125.0 L658.0,125.0 L633.6,125.0 L609.2,125.0"/>
<path d="M1195.2,125.0 L1170.8,125.0 L1146.4,125.0 L1122.0,125.0 L1097.6,125.0 L1073.1,125.0 L1048.7,125.0 L1024.3,125.0 L999.9,125.0 L975.5,125.0 L951.0,125.0 L926.6,125.0 L902.2,125.0"/>
<path d="M902.2,76.0 L889.6,76.0 L876.9,76.0 L864.3,76.0 L851.6,76.0 L839.0,76.0 L826.4,76.0 L813.7,76.0 L801.1,76.0 L788.4,76.0 L775.8,76.0 L763.2,76.0 L750.5,76.0"/>
<path d="M1053.9,76.0 L1041.2,76.0 L1028.6,76.0 L1016.0,76.0 L1003.3,76.0 L990.7,76.0 L978.0,76.0 L965.4,76.0 L952.8,76.0 L940.1,76.0 L927.5,76.0 L914.8,76.0 L902.2,76.0"/>
<path d="M902.2,27.0 L902.2,27.0 L902.2,27.0 L902.2,27.0 L902.2,27.0 L902.2,27.0 L902.2,27.0 L902.2,27.0 L902.2,27.0 L902.2,27.0 L902.2,27.0 L902.2,27.0 L902.2,27.0"/>
<path d="M902.2,27.0 L902.2,27.0 L902.2,27.0 L902.2,27.0 L902.2,27.0 L902.2,27.0 L902.2,27.0 L902.2,27.0 L902.2,27.0 L902.2,27.0 L902.2,27.0 L902.2,27.0 L902.2,27.0"/>
</g>
</g>
<g font-family="'DejaVu Sans','Liberation Sans',sans-serif" font-size="9.72" fill="#808080" text-anchor="middle">
<text x="902.2" y="623.2">−90<tspan font-size="6.8" dy="-3.6" dx="1.6">°</tspan></text>
<text x="902.2" y="525.6">−60<tspan font-size="6.8" dy="-3.6" dx="1.6">°</tspan></text>
<text x="902.2" y="427.9">−30<tspan font-size="6.8" dy="-3.6" dx="1.6">°</tspan></text>
<text x="902.2" y="330.2">+0<tspan font-size="6.8" dy="-3.6" dx="1.6">°</tspan></text>
<text x="902.2" y="220.7">+30<tspan font-size="6.8" dy="-3.6" dx="1.6">°</tspan></text>
<text x="902.2" y="123.0">+60<tspan font-size="6.8" dy="-3.6" dx="1.6">°</tspan></text>
<text x="902.2" y="25.4">+90<tspan font-size="6.8" dy="-3.6" dx="1.6">°</tspan></text>
<text x="804.5" y="330.2">+30<tspan font-size="6.8" dy="-3.6" dx="1.6">°</tspan></text>
<text x="706.8" y="330.2">+60<tspan font-size="6.8" dy="-3.6" dx="1.6">°</tspan></text>
<text x="609.2" y="330.2">+90<tspan font-size="6.8" dy="-3.6" dx="1.6">°</tspan></text>
<text x="511.5" y="330.2">+120<tspan font-size="6.8" dy="-3.6" dx="1.6">°</tspan></text>
<text x="413.8" y="330.2">+150<tspan font-size="6.8" dy="-3.6" dx="1.6">°</tspan></text>
<text x="316.1" y="330.2">+180<tspan font-size="6.8" dy="-3.6" dx="1.6">°</tspan></text>
<text x="1390.6" y="330.2">+210<tspan font-size="6.8" dy="-3.6" dx="1.6">°</tspan></text>
<text x="1292.9" y="330.2">+240<tspan font-size="6.8" dy="-3.6" dx="1.6">°</tspan></text>
<text x="1195.2" y="330.2">+270<tspan font-size="6.8" dy="-3.6" dx="1.6">°</tspan></text>
<text x="1097.6" y="330.2">+300<tspan font-size="6.8" dy="-3.6" dx="1.6">°</tspan></text>
<text x="999.9" y="330.2">+330<tspan font-size="6.8" dy="-3.6" dx="1.6">°</tspan></text>
<text x="1487.8" y="330.2">+180<tspan font-size="6.8" dy="-3.6" dx="1.6">°</tspan></text>
</g>
<g fill="none" stroke="#666666" stroke-opacity="0.7" stroke-width="1.389" stroke-dasharray="1.389 2.292">
<path d="M692.7,95.0 C680.6,100.3 641.0,118.8 620.0,126.7 C599.0,134.7 588.9,134.3 566.7,142.7 C544.5,151.1 513.4,163.7 486.7,177.0 C460.0,190.3 429.0,208.9 406.7,222.7 C384.4,236.5 365.0,249.8 353.0,260.0 C341.0,270.2 339.1,275.2 334.7,284.0 C330.3,292.8 327.8,305.3 326.7,313.0 C325.6,320.7 327.2,324.9 328.3,330.0 C329.4,335.1 329.7,336.1 333.3,343.3 C336.9,350.5 342.8,363.9 350.0,373.3 C357.2,382.8 367.8,392.8 376.7,400.0 C385.6,407.2 398.9,413.9 403.3,416.7"/>
<path d="M800.0,66.0 C790.0,69.7 758.3,81.5 740.0,88.0 C721.7,94.5 707.8,98.7 690.0,105.0 C672.2,111.3 654.7,117.7 633.0,126.0 C611.3,134.3 582.2,145.8 560.0,155.0 C537.8,164.2 519.3,172.0 500.0,181.0 C480.7,190.0 461.8,198.0 444.4,208.9 C426.9,219.8 406.9,234.9 395.3,246.4 C383.8,257.9 379.0,268.1 375.1,278.2 C371.2,288.3 372.4,298.4 372.2,307.1 C372.0,315.8 372.4,321.9 373.7,330.2 C375.0,338.5 375.6,347.3 380.0,356.7 C384.4,366.1 391.1,377.3 400.0,386.7 C408.9,396.1 425.5,407.8 433.3,413.3 C441.1,418.9 444.5,418.9 446.7,420.0"/>
<path d="M710.0,103.7 C701.7,108.1 678.3,119.0 660.0,130.0 C641.7,141.1 617.3,156.3 600.0,170.0 C582.7,183.7 570.5,195.2 556.0,212.0 C541.5,228.8 523.1,255.6 513.3,270.7 C503.5,285.8 501.7,291.1 497.3,302.7 C492.9,314.2 488.8,328.2 486.7,340.0 C484.6,351.8 483.9,363.3 485.0,373.3 C486.1,383.3 489.7,391.7 493.3,400.0 C496.9,408.3 504.5,419.4 506.7,423.3"/>
<path d="M800.0,169.0 C798.3,172.5 793.5,182.8 790.0,190.0 C786.5,197.2 782.0,203.7 778.7,212.0 C775.4,220.3 772.0,230.9 770.0,240.0 C768.0,249.1 767.5,256.7 766.7,266.7 C765.9,276.7 764.5,287.8 765.0,300.0 C765.5,312.2 767.5,325.6 770.0,340.0 C772.5,354.4 776.2,372.9 780.0,386.7 C783.8,400.5 790.8,416.9 793.0,423.0"/>
<path d="M1022.0,150.0 C1020.3,153.0 1015.7,160.7 1012.0,168.0 C1008.3,175.3 1004.3,184.7 1000.0,194.0 C995.7,203.3 990.7,214.3 986.0,224.0 C981.3,233.7 976.7,242.7 972.0,252.0 C967.3,261.3 961.7,272.6 958.0,280.0 C954.3,287.4 956.3,286.2 950.0,296.7 C943.7,307.2 929.5,328.0 920.0,343.0 C910.5,358.0 901.9,372.8 893.0,386.7 C884.1,400.6 871.1,420.0 866.7,426.7"/>
<path d="M950.0,100.0 C950.7,102.0 952.7,107.0 954.0,112.0 C955.3,117.0 956.3,122.0 958.0,130.0 C959.7,138.0 962.3,150.0 964.0,160.0 C965.7,170.0 967.0,179.3 968.0,190.0 C969.0,200.7 969.7,212.3 970.0,224.0 C970.3,235.7 970.8,244.6 970.0,260.0 C969.2,275.4 967.0,300.0 965.0,316.7 C963.0,333.4 961.0,345.0 958.0,360.0 C955.0,375.0 948.6,398.9 946.7,406.7"/>
<path d="M1058.0,140.0 C1058.3,142.0 1058.7,145.3 1060.0,152.0 C1061.3,158.7 1064.3,170.0 1066.0,180.0 C1067.7,190.0 1069.0,201.3 1070.0,212.0 C1071.0,222.7 1072.0,234.3 1072.0,244.0 C1072.0,253.7 1070.9,261.8 1070.0,270.0 C1069.1,278.2 1068.9,282.5 1066.7,293.0 C1064.5,303.5 1061.2,320.7 1056.7,333.0 C1052.2,345.3 1045.0,358.6 1040.0,366.7 C1035.0,374.8 1028.9,379.2 1026.7,381.7"/>
<path d="M1044.0,120.0 C1044.7,125.0 1046.3,139.3 1048.0,150.0 C1049.7,160.7 1052.7,172.3 1054.0,184.0 C1055.3,195.7 1055.8,206.2 1056.0,220.0 C1056.2,233.8 1055.5,253.4 1055.0,266.7 C1054.5,280.0 1053.3,294.4 1053.0,300.0"/>
<path d="M1073.0,300.0 C1071.3,308.3 1067.4,333.3 1063.0,350.0 C1058.6,366.7 1049.4,391.7 1046.7,400.0"/>
<path d="M860.0,111.0 C862.5,111.8 869.5,113.7 875.0,115.5 C880.5,117.3 890.2,120.9 893.3,122.0"/>
<path d="M908.7,110.7 C908.8,107.6 909.2,98.5 909.3,92.0 C909.3,85.5 909.0,75.3 909.0,72.0"/>
<path d="M1100.0,125.0 C1105.8,128.7 1123.9,139.0 1135.0,147.0 C1146.1,155.0 1154.2,162.0 1166.7,173.0 C1179.2,184.0 1199.0,200.7 1210.0,213.0 C1221.0,225.3 1226.9,233.4 1233.0,246.7 C1239.1,260.0 1244.4,285.3 1246.7,293.0"/>
<path d="M1200.0,150.0 C1210.0,155.8 1241.2,173.9 1260.0,185.0 C1278.8,196.1 1295.2,204.8 1313.0,216.7 C1330.8,228.6 1353.9,245.0 1366.7,256.7 C1379.5,268.4 1384.8,277.3 1390.0,286.7 C1395.2,296.1 1396.7,308.6 1398.0,313.0"/>
<path d="M1443.8,385.1 L1450.3,378.6 L1456.2,372.1 L1461.4,365.6 L1465.9,359.1 L1469.8,352.6 L1472.9,346.0 L1475.4,339.5 L1477.1,333.0 L1478.2,326.5 L1478.5,320.0 L1478.2,313.5 L1477.1,307.0 L1475.4,300.5 L1472.9,294.0 L1469.8,287.4 L1465.9,280.9 L1461.4,274.4 L1456.2,267.9 L1450.3,261.4 L1443.8,254.9 L1436.5,248.4 L1428.7,241.9 L1420.2,235.3 L1411.1,228.8 L1401.3,222.3 L1390.9,215.8 L1380.0,209.3 L1368.4,202.8 L1356.3,196.3 L1343.7,189.8 L1330.5,183.2 L1316.8,176.7 L1302.5,170.2 L1287.8,163.7 L1272.6,157.2 L1257.0,150.7 L1240.9,144.2 L1224.5,137.7 L1207.6,131.2 L1190.4,124.6 L1172.8,118.1 L1154.8,111.6 L1136.6,105.1 L1118.1,98.6 L1099.3,92.1 L1080.3,85.6 L1061.1,79.1 L1041.6,72.5 L1022.0,66.0 L1002.3,59.5 L982.4,53.0 L962.4,46.5"/>
<path d="M1439.4,381.9 L1445.5,375.4 L1451.0,368.8 L1455.8,362.3 L1459.9,355.8 L1463.4,349.3 L1466.1,342.8 L1468.2,336.3 L1469.6,329.8 L1470.3,323.3 L1470.3,316.7 L1469.6,310.2 L1468.2,303.7 L1466.1,297.2 L1463.4,290.7 L1459.9,284.2 L1455.8,277.7 L1451.0,271.2 L1445.5,264.6 L1439.4,258.1 L1432.6,251.6 L1425.2,245.1 L1417.1,238.6 L1408.4,232.1 L1399.1,225.6 L1389.2,219.1 L1378.7,212.6 L1367.6,206.0 L1356.0,199.5 L1343.8,193.0 L1331.0,186.5 L1317.7,180.0 L1304.0,173.5 L1289.7,167.0 L1275.0,160.5 L1259.8,153.9 L1244.1,147.4 L1228.1,140.9 L1211.6,134.4 L1194.8,127.9 L1177.7,121.4 L1160.1,114.9 L1142.3,108.4 L1124.2,101.8 L1105.8,95.3 L1087.2,88.8 L1068.3,82.3 L1049.3,75.8 L1030.0,69.3 L1010.6,62.8"/>
<path d="M1433.3,378.6 L1439.0,372.1 L1444.0,365.6 L1448.4,359.1 L1452.1,352.6 L1455.2,346.0 L1457.5,339.5 L1459.2,333.0 L1460.3,326.5 L1460.6,320.0 L1460.3,313.5 L1459.2,307.0 L1457.5,300.5 L1455.2,294.0 L1452.1,287.4 L1448.4,280.9 L1444.0,274.4 L1439.0,267.9 L1433.3,261.4 L1426.9,254.9 L1419.9,248.4 L1412.3,241.9 L1404.1,235.3 L1395.2,228.8 L1385.8,222.3 L1375.8,215.8 L1365.1,209.3 L1354.0,202.8 L1342.2,196.3 L1330.0,189.8 L1317.2,183.2 L1303.9,176.7 L1290.1,170.2 L1275.8,163.7 L1261.1,157.2 L1246.0,150.7 L1230.4,144.2 L1214.5,137.7 L1198.1,131.2 L1181.4,124.6 L1164.4,118.1 L1147.0,111.6 L1129.3,105.1 L1111.4,98.6 L1093.2,92.1 L1074.8,85.6 L1056.1,79.1 L1037.3,72.5 L1018.3,66.0"/>
</g>
<path d="M1085.0,101.0 C1090.8,104.7 1109.2,116.0 1120.0,123.0 C1130.8,130.0 1136.7,134.7 1150.0,143.0 C1163.3,151.3 1185.0,162.4 1200.0,173.0 C1215.0,183.6 1228.9,196.7 1240.0,206.7 C1251.1,216.7 1258.7,223.8 1266.7,233.0 C1274.7,242.2 1284.5,256.9 1288.0,261.7" fill="none" stroke="#666666" stroke-opacity="0.6" stroke-width="0.8"/>
<path d="M717.5,241.5 L717.5,239.9 L717.6,238.4 L717.7,236.8 L717.8,235.3 L717.9,233.7 L718.0,232.2 L718.1,230.6 L718.2,229.1 L718.4,227.5 L718.5,226.0 L718.7,224.4 L718.9,222.9 L719.1,221.3 L719.3,219.8 L719.5,218.2 L719.7,216.7 L720.0,215.2 L720.2,213.6 L720.5,212.1 L720.7,210.6 L721.0,209.0 L721.3,207.5 L721.6,206.0 L721.9,204.5 L722.3,202.9 L722.6,201.4 L722.9,199.9 L723.3,198.4 L723.7,196.9 L724.1,195.4 L724.4,193.8 L724.8,192.3 L725.2,190.8 L725.7,189.3 L726.1,187.8 L726.5,186.3 L727.0,184.8 L727.4,183.4 L727.9,181.9 L728.3,180.4 L728.8,178.9 L729.3,177.4 L729.8,176.0 L730.3,174.5 L730.8,173.0 L731.3,171.6 L731.9,170.1 L732.4,168.6 L732.9,167.2 L733.5,165.7 L734.0,164.3 L734.6,162.9 L735.1,161.4 L735.7,160.0 L736.2,158.6 L736.8,157.2 L737.4,155.8 L738.0,154.3 L738.5,152.9 L739.1,151.6 L739.7,150.2 L740.3,148.8 L740.9,147.4 L741.5,146.0 L742.1,144.7 L742.7,143.3 L743.2,142.0 L743.8,140.6 L744.4,139.3 L745.0,138.0 L745.6,136.7 L746.2,135.4 L746.7,134.1 L747.3,132.8 L747.8,131.5 L748.4,130.3 L748.9,129.0 L749.5,127.8 L750.0,126.5 L750.5,125.3 L751.0,124.1 L751.5,122.9 L752.0,121.8 L752.5,120.6 L752.9,119.4 L753.3,118.3 L753.8,117.2 L754.1,116.1 L754.5,115.0 L754.9,114.0 L755.2,112.9 L755.5,111.9 L755.8,110.9 L756.0,109.9 L756.2,108.9 L756.4,108.0 L756.5,107.1 L756.6,106.2 L756.7,105.3" fill="none" stroke="#dc11ff" stroke-width="1.389" stroke-dasharray="1.389 2.292"/>
<path d="M716.1,242.8 L715.8,241.6 L715.5,240.5 L715.3,239.3 L715.0,238.1 L714.8,236.9 L714.5,235.8 L714.3,234.6 L714.0,233.4 L713.8,232.3 L713.6,231.1 L713.4,230.0 L713.2,228.8 L713.0,227.7 L712.8,226.5 L712.6,225.4 L712.4,224.2 L712.2,223.1 L712.1,221.9 L711.9,220.8 L711.7,219.6 L711.6,218.5 L711.4,217.4 L711.3,216.2 L711.1,215.1 L711.0,214.0 L710.9,212.8 L710.8,211.7 L710.6,210.6 L710.5,209.5 L710.4,208.4 L710.3,207.3 L710.2,206.2 L710.1,205.1 L710.0,203.9 L710.0,202.8 L709.9,201.8 L709.8,200.7 L709.7,199.6 L709.7,198.5 L709.6,197.4 L709.5,196.3 L709.5,195.2 L709.4,194.2 L709.4,193.1 L709.3,192.0 L709.3,191.0 L709.2,189.9 L709.2,188.9 L709.2,187.8 L709.1,186.8 L709.1,185.7 L709.1,184.7 L709.0,183.7 L709.0,182.7 L709.0,181.6 L709.0,180.6 L708.9,179.6 L708.9,178.6 L708.9,177.6 L708.9,176.6 L708.9,175.6 L708.8,174.6 L708.8,173.7 L708.8,172.7 L708.8,171.7 L708.7,170.7 L708.7,169.8 L708.7,168.8 L708.7,167.9 L708.6,167.0 L708.6,166.0 L708.6,165.1 L708.5,164.2 L708.5,163.3 L708.4,162.4 L708.4,161.5 L708.3,160.6 L708.3,159.7 L708.2,158.8 L708.1,158.0 L708.1,157.1 L708.0,156.3 L707.9,155.4 L707.8,154.6 L707.7,153.8 L707.6,153.0 L707.4,152.2 L707.3,151.4 L707.2,150.6 L707.0,149.8 L706.9,149.0 L706.7,148.3 L706.5,147.5 L706.3,146.8 L706.1,146.1 L705.9,145.4 L705.7,144.7 L705.5,144.0 L705.2,143.3" fill="none" stroke="#dc11ff" stroke-width="1.389" stroke-dasharray="1.389 2.292"/>
<path d="M733.3,238.7 L734.2,236.4 L735.2,234.1 L736.1,231.8 L737.1,229.5 L738.2,227.2 L739.2,224.9 L740.3,222.7 L741.4,220.4 L742.5,218.1 L743.6,215.8 L744.8,213.5 L746.0,211.2 L747.2,208.9 L748.4,206.6 L749.7,204.3 L751.0,202.0 L752.3,199.7 L753.6,197.4 L755.0,195.1 L756.3,192.8 L757.7,190.6 L759.2,188.3 L760.6,186.0 L762.1,183.7 L763.5,181.4 L765.0,179.1 L766.6,176.8 L768.1,174.5 L769.7,172.2 L771.3,169.9 L772.9,167.6 L774.5,165.3 L776.1,163.1 L777.8,160.8 L779.5,158.5 L781.2,156.2 L782.9,153.9 L784.6,151.6 L786.4,149.3 L788.1,147.0 L789.9,144.7 L791.7,142.4 L793.5,140.1 L795.4,137.8 L797.2,135.6 L799.1,133.3 L801.0,131.0 L802.9,128.7 L804.8,126.4 L806.7,124.1 L808.7,121.8 L810.6,119.5 L812.6,117.2 L814.6,114.9 L816.6,112.6 L818.6,110.4 L820.6,108.1 L822.7,105.8 L824.7,103.5 L826.8,101.2 L828.8,98.9 L830.9,96.6 L833.0,94.3 L835.1,92.0 L837.2,89.8 L839.3,87.5 L841.5,85.2 L843.6,82.9 L845.7,80.6 L847.9,78.3 L850.1,76.0 L852.2,73.8 L854.4,71.5 L856.6,69.2 L858.8,66.9 L861.0,64.6 L863.1,62.4 L865.3,60.1 L867.5,57.8 L869.7,55.5 L871.9,53.3 L874.1,51.0 L876.3,48.8 L878.5,46.5 L880.7,44.3 L882.9,42.1 L885.0,39.9 L887.0,37.8 L889.0,35.7 L890.7,33.8 L891.8,32.3 L891.6,31.4 L888.7,31.6M919.7,32.8 L923.1,34.5 L927.2,36.5 L931.6,38.6 L936.2,40.7 L940.9,42.9" fill="none" stroke="#dc11ff" stroke-width="1.389" stroke-dasharray="1.389 2.292"/>
<path d="M731.0,239.0 L732.4,236.1 L733.8,233.2 L735.3,230.3 L736.8,227.4 L738.3,224.5 L739.9,221.6 L741.6,218.7 L743.2,215.8 L744.9,212.8 L746.7,209.9 L748.5,207.0 L750.3,204.1 L752.1,201.2 L754.0,198.3 L755.9,195.4 L757.9,192.5 L759.9,189.6 L761.9,186.7 L764.0,183.8 L766.1,180.9 L768.2,178.0 L770.4,175.1 L772.6,172.2 L774.8,169.3 L777.1,166.4 L779.4,163.5 L781.7,160.6 L784.0,157.7 L786.4,154.8 L788.8,151.9 L791.3,149.0 L793.7,146.1 L796.2,143.2 L798.7,140.3 L801.2,137.4 L803.8,134.5 L806.4,131.6 L809.0,128.7 L811.6,125.8 L814.3,122.9 L816.9,120.0 L819.6,117.1 L822.3,114.2 L825.1,111.3 L827.8,108.4 L830.6,105.5 L833.3,102.6 L836.1,99.7 L838.9,96.8 L841.8,93.9 L844.6,91.0 L847.5,88.1 L850.3,85.2 L853.2,82.4 L856.1,79.5 L858.9,76.6 L861.8,73.7 L864.7,70.9 L867.6,68.0 L870.5,65.1 L873.5,62.3 L876.4,59.5 L879.3,56.6 L882.2,53.8 L885.0,51.1 L887.9,48.3 L890.7,45.6 L893.5,43.0 L896.2,40.5 L898.9,38.2 L901.4,36.3 L903.9,34.9 L906.6,34.5 L910.0,35.2 L914.2,36.7 L918.9,38.8 L924.2,41.1 L929.6,43.7 L935.3,46.3 L941.0,49.0 L946.8,51.8 L952.7,54.5 L958.6,57.3 L964.5,60.2 L970.4,63.0 L976.3,65.9 L982.2,68.7 L988.2,71.6 L994.1,74.4 L1000.0,77.3 L1005.8,80.2 L1011.7,83.1 L1017.5,86.0 L1023.3,88.8 L1029.1,91.7 L1034.9,94.6 L1040.6,97.5 L1046.3,100.4 L1052.0,103.3" fill="none" stroke="#dc11ff" stroke-width="1.389" stroke-dasharray="1.389 2.292"/>
<path d="M729.0,239.3 L730.1,236.3 L731.2,233.4 L732.3,230.4 L733.5,227.4 L734.7,224.5 L736.0,221.5 L737.3,218.5 L738.6,215.5 L740.0,212.6 L741.5,209.6 L742.9,206.6 L744.5,203.7 L746.0,200.7 L747.6,197.7 L749.2,194.8 L750.9,191.8 L752.6,188.8 L754.4,185.9 L756.2,182.9 L758.0,179.9 L759.8,177.0 L761.7,174.0 L763.7,171.1 L765.6,168.1 L767.6,165.1 L769.6,162.2 L771.7,159.2 L773.8,156.2 L775.9,153.3 L778.1,150.3 L780.3,147.4 L782.5,144.4 L784.7,141.5 L787.0,138.5 L789.3,135.5 L791.6,132.6 L794.0,129.6 L796.4,126.7 L798.8,123.7 L801.2,120.8 L803.7,117.9 L806.2,114.9 L808.7,112.0 L811.2,109.0 L813.7,106.1 L816.3,103.2 L818.8,100.2 L821.4,97.3 L824.0,94.4 L826.7,91.5 L829.3,88.6 L831.9,85.7 L834.6,82.8 L837.2,79.9 L839.9,77.0 L842.5,74.2 L845.2,71.4 L847.8,68.5 L850.4,65.7 L853.0,63.0 L855.6,60.2 L858.1,57.5 L860.5,54.9 L862.8,52.4 L865.0,49.9 L866.9,47.6 L868.5,45.5 L869.7,43.6 L870.1,42.1 L869.6,41.1 L867.7,40.7 L864.2,40.9 L859.0,41.7 L852.3,43.0M956.1,44.8 L959.9,46.8 L964.3,49.0 L969.2,51.5 L974.4,54.0 L979.8,56.6 L985.3,59.2 L991.0,62.0 L996.7,64.7 L1002.5,67.5 L1008.3,70.3 L1014.2,73.2 L1020.0,76.0 L1025.9,78.9 L1031.7,81.7 L1037.6,84.6 L1043.4,87.5 L1049.3,90.4 L1055.1,93.3 L1060.9,96.3 L1066.6,99.2 L1072.3,102.1 L1078.0,105.0 L1083.7,108.0 L1089.3,110.9" fill="none" stroke="#dc11ff" stroke-width="1.389" stroke-dasharray="1.389 2.292"/>
<path d="M726.5,239.5 L728.0,236.3 L729.5,233.0 L731.1,229.8 L732.8,226.5 L734.4,223.3 L736.2,220.0 L738.0,216.8 L739.8,213.5 L741.7,210.3 L743.7,207.0 L745.7,203.8 L747.7,200.5 L749.8,197.3 L751.9,194.0 L754.1,190.8 L756.3,187.5 L758.6,184.3 L760.9,181.0 L763.2,177.8 L765.6,174.6 L768.1,171.3 L770.5,168.1 L773.1,164.8 L775.6,161.6 L778.2,158.3 L780.8,155.1 L783.5,151.8 L786.2,148.6 L788.9,145.3 L791.7,142.1 L794.5,138.8 L797.4,135.6 L800.2,132.3 L803.1,129.1 L806.1,125.8 L809.0,122.6 L812.0,119.4 L815.0,116.1 L818.1,112.9 L821.1,109.6 L824.2,106.4 L827.3,103.1 L830.5,99.9 L833.6,96.6 L836.8,93.4 L840.0,90.1 L843.2,86.9 L846.5,83.7 L849.7,80.4 L853.0,77.2 L856.3,73.9 L859.6,70.7 L862.9,67.4 L866.2,64.2 L869.5,61.0 L872.8,57.7 L876.2,54.5 L879.5,51.3 L882.9,48.0 L886.2,44.8 L889.6,41.6 L892.9,38.4 L896.2,35.3 L899.4,32.3 L902.3,29.9 L905.8,30.2 L911.5,32.7 L917.8,35.7 L924.4,38.8 L931.1,42.0 L937.8,45.2 L944.6,48.4 L951.3,51.7 L958.0,54.9 L964.7,58.1 L971.4,61.4 L978.1,64.6 L984.7,67.8 L991.4,71.1 L998.0,74.3 L1004.6,77.6 L1011.1,80.8 L1017.7,84.1 L1024.1,87.3 L1030.6,90.6 L1037.0,93.8 L1043.4,97.0 L1049.7,100.3 L1056.0,103.5 L1062.2,106.8 L1068.4,110.0 L1074.6,113.3 L1080.7,116.5 L1086.7,119.8 L1092.7,123.0 L1098.6,126.3 L1104.5,129.5 L1110.3,132.8 L1116.0,136.0" fill="none" stroke="#dc11ff" stroke-width="1.389" stroke-dasharray="1.389 2.292"/>
<path d="M724.0,240.0 L726.4,236.7 L728.9,233.5 L731.4,230.2 L734.0,227.0 L736.6,223.8 L739.2,220.5 L742.0,217.3 L744.7,214.0 L747.5,210.8 L750.4,207.6 L753.2,204.4 L756.2,201.2 L759.2,197.9 L762.2,194.7 L765.2,191.5 L768.3,188.3 L771.4,185.1 L774.6,182.0 L777.8,178.8 L781.0,175.6 L784.2,172.5 L787.5,169.3 L790.8,166.2 L794.2,163.0 L797.5,159.9 L800.9,156.8 L804.3,153.7 L807.7,150.6 L811.1,147.5 L814.6,144.5 L818.0,141.4 L821.5,138.4 L825.0,135.4 L828.5,132.4 L832.0,129.4 L835.5,126.5 L839.0,123.6 L842.5,120.7 L845.9,117.9 L849.4,115.1 L852.9,112.3 L856.4,109.5 L859.8,106.9 L863.2,104.2 L866.6,101.7 L870.0,99.2 L873.4,96.7 L876.7,94.4 L880.0,92.1 L883.3,89.9 L886.5,87.8 L889.7,85.9 L892.9,84.1 L896.1,82.4 L899.3,80.9 L902.4,79.5 L905.6,78.4 L908.7,77.4 L911.9,76.6 L915.2,76.1 L918.4,75.8 L921.8,75.7 L925.3,75.8 L928.8,76.2 L932.5,76.8 L936.3,77.6 L940.2,78.6 L944.3,79.9 L948.5,81.3 L952.9,82.8 L957.4,84.5 L962.0,86.4 L966.7,88.4 L971.5,90.5 L976.5,92.7 L981.5,95.0 L986.6,97.3 L991.8,99.8 L997.0,102.3 L1002.3,104.9 L1007.6,107.5 L1013.0,110.2 L1018.5,113.0 L1023.9,115.8 L1029.4,118.6 L1034.9,121.5 L1040.4,124.3 L1045.9,127.3 L1051.4,130.2 L1056.8,133.2 L1062.3,136.2 L1067.8,139.2 L1073.2,142.2 L1078.7,145.2 L1084.1,148.3 L1089.4,151.4 L1094.8,154.5 L1100.0,157.6 L1105.3,160.7" fill="none" stroke="#dc11ff" stroke-width="1.389" stroke-dasharray="1.389 2.292"/>
<path d="M708.0,239.0 L708.5,238.2 L709.0,237.3 L709.4,236.5 L709.9,235.7 L710.4,234.9 L710.9,234.0 L711.4,233.2 L711.9,232.4 L712.4,231.6 L712.9,230.7 L713.4,229.9 L713.9,229.1 L714.5,228.3 L715.0,227.4 L715.5,226.6 L716.0,225.8 L716.6,225.0 L717.1,224.1 L717.6,223.3 L718.2,222.5 L718.7,221.6 L719.3,220.8 L719.8,220.0 L720.4,219.2 L721.0,218.3 L721.5,217.5 L722.1,216.7 L722.7,215.9 L723.2,215.0 L723.8,214.2 L724.4,213.4 L725.0,212.6 L725.6,211.7 L726.2,210.9 L726.8,210.1 L727.4,209.3 L728.0,208.4 L728.6,207.6 L729.2,206.8 L729.8,206.0 L730.4,205.1 L731.0,204.3 L731.7,203.5 L732.3,202.7 L732.9,201.8 L733.6,201.0 L734.2,200.2 L734.8,199.4 L735.5,198.5 L736.1,197.7 L736.8,196.9 L737.4,196.0 L738.1,195.2 L738.7,194.4 L739.4,193.6 L740.1,192.7 L740.7,191.9 L741.4,191.1 L742.1,190.3 L742.8,189.4 L743.5,188.6 L744.1,187.8 L744.8,187.0 L745.5,186.1 L746.2,185.3 L746.9,184.5 L747.6,183.7 L748.3,182.8 L749.0,182.0 L749.7,181.2 L750.4,180.4 L751.1,179.5 L751.9,178.7 L752.6,177.9 L753.3,177.1 L754.0,176.3 L754.8,175.4 L755.5,174.6 L756.2,173.8 L757.0,173.0 L757.7,172.1 L758.5,171.3 L759.2,170.5 L759.9,169.7 L760.7,168.8 L761.5,168.0 L762.2,167.2 L763.0,166.4 L763.7,165.5 L764.5,164.7 L765.3,163.9 L766.0,163.1 L766.8,162.2 L767.6,161.4 L768.4,160.6 L769.1,159.8 L769.9,158.9 L770.7,158.1 L771.5,157.3" fill="none" stroke="#dc11ff" stroke-width="1.389" stroke-dasharray="1.389 2.292"/>
<path d="M638.3,260.6 L639.9,258.6 L641.6,256.5 L643.3,254.5 L645.0,252.5 L646.7,250.5 L648.5,248.4 L650.3,246.4 L652.1,244.4 L654.0,242.4 L655.9,240.3 L657.8,238.3 L659.8,236.3 L661.7,234.3 L663.7,232.3 L665.8,230.3 L667.8,228.2 L669.9,226.2 L672.0,224.2 L674.2,222.2 L676.3,220.2 L678.5,218.2 L680.7,216.2 L682.9,214.2 L685.2,212.2 L687.5,210.2 L689.8,208.2 L692.1,206.2 L694.4,204.2 L696.8,202.2 L699.2,200.3 L701.6,198.3 L704.1,196.3 L706.5,194.3 L709.0,192.3 L711.5,190.4 L714.0,188.4 L716.5,186.4 L719.1,184.5 L721.6,182.5 L724.2,180.5 L726.8,178.6 L729.4,176.6 L732.0,174.7 L734.7,172.8 L737.3,170.8 L740.0,168.9 L742.7,167.0 L745.4,165.0 L748.1,163.1 L750.8,161.2 L753.5,159.3 L756.3,157.4 L759.0,155.5 L761.8,153.6 L764.5,151.7 L767.3,149.9 L770.1,148.0 L772.9,146.1 L775.7,144.3 L778.5,142.4 L781.3,140.6 L784.1,138.8 L786.9,137.0 L789.7,135.2 L792.5,133.4 L795.3,131.6 L798.1,129.8 L800.9,128.1 L803.7,126.3 L806.5,124.6 L809.3,122.9 L812.1,121.2 L814.9,119.5 L817.6,117.8 L820.4,116.2 L823.1,114.5 L825.9,112.9 L828.6,111.3 L831.3,109.8 L834.0,108.2 L836.7,106.7 L839.4,105.2 L842.0,103.8 L844.6,102.3 L847.3,101.0 L849.8,99.6 L852.4,98.3 L855.0,97.0 L857.5,95.7 L860.0,94.5 L862.5,93.4 L864.9,92.3 L867.3,91.2 L869.7,90.2 L872.1,89.2 L874.4,88.3 L876.7,87.5 L879.0,86.7 L881.3,86.0" fill="none" stroke="#ff1c00" stroke-width="1.389" stroke-dasharray="1.389 2.292"/>
<path d="M656.7,266.7 L658.2,264.6 L659.7,262.5 L661.3,260.4 L662.9,258.3 L664.5,256.1 L666.1,254.0 L667.8,251.9 L669.5,249.8 L671.2,247.7 L673.0,245.6 L674.8,243.5 L676.6,241.4 L678.5,239.3 L680.3,237.2 L682.2,235.1 L684.2,233.0 L686.1,230.9 L688.1,228.8 L690.1,226.7 L692.1,224.6 L694.2,222.5 L696.3,220.4 L698.4,218.4 L700.5,216.3 L702.7,214.2 L704.9,212.1 L707.1,210.0 L709.3,207.9 L711.6,205.9 L713.8,203.8 L716.1,201.7 L718.4,199.7 L720.8,197.6 L723.1,195.5 L725.5,193.5 L727.9,191.4 L730.3,189.4 L732.7,187.3 L735.2,185.3 L737.7,183.2 L740.1,181.2 L742.7,179.1 L745.2,177.1 L747.7,175.1 L750.2,173.0 L752.8,171.0 L755.4,169.0 L758.0,167.0 L760.6,165.0 L763.2,163.0 L765.8,161.0 L768.4,159.0 L771.1,157.0 L773.7,155.0 L776.4,153.1 L779.1,151.1 L781.8,149.1 L784.4,147.2 L787.1,145.2 L789.8,143.3 L792.5,141.4 L795.2,139.5 L798.0,137.6 L800.7,135.7 L803.4,133.8 L806.1,131.9 L808.8,130.0 L811.5,128.2 L814.2,126.4 L816.9,124.5 L819.7,122.7 L822.4,120.9 L825.0,119.2 L827.7,117.4 L830.4,115.7 L833.1,114.0 L835.7,112.3 L838.4,110.6 L841.0,108.9 L843.7,107.3 L846.3,105.7 L848.9,104.1 L851.4,102.6 L854.0,101.1 L856.6,99.6 L859.1,98.2 L861.6,96.8 L864.1,95.4 L866.5,94.1 L869.0,92.9 L871.4,91.6 L873.8,90.5 L876.2,89.4 L878.5,88.3 L880.9,87.3 L883.2,86.4 L885.5,85.5 L887.7,84.7 L890.0,84.0" fill="none" stroke="#ff1c00" stroke-width="1.389" stroke-dasharray="1.389 2.292"/>
<path d="M658.9,266.1 L660.6,263.7 L662.4,261.2 L664.2,258.8 L666.1,256.4 L668.0,254.0 L669.9,251.5 L671.9,249.1 L673.9,246.7 L676.0,244.3 L678.1,241.9 L680.2,239.5 L682.4,237.0 L684.6,234.6 L686.8,232.2 L689.1,229.8 L691.4,227.4 L693.7,225.0 L696.1,222.6 L698.5,220.2 L700.9,217.8 L703.4,215.4 L705.9,213.0 L708.4,210.6 L711.0,208.2 L713.5,205.9 L716.2,203.5 L718.8,201.1 L721.5,198.7 L724.2,196.4 L726.9,194.0 L729.6,191.6 L732.4,189.3 L735.2,186.9 L738.0,184.6 L740.9,182.2 L743.7,179.9 L746.6,177.6 L749.5,175.2 L752.4,172.9 L755.4,170.6 L758.3,168.3 L761.3,166.0 L764.3,163.7 L767.3,161.4 L770.3,159.1 L773.4,156.8 L776.4,154.6 L779.5,152.3 L782.5,150.1 L785.6,147.8 L788.7,145.6 L791.8,143.4 L794.9,141.2 L798.0,139.0 L801.1,136.8 L804.2,134.7 L807.3,132.5 L810.4,130.4 L813.5,128.3 L816.6,126.2 L819.7,124.1 L822.8,122.1 L825.8,120.0 L828.9,118.0 L832.0,116.0 L835.0,114.1 L838.0,112.2 L841.1,110.3 L844.1,108.4 L847.1,106.6 L850.0,104.8 L853.0,103.1 L855.9,101.4 L858.8,99.7 L861.6,98.1 L864.5,96.6 L867.3,95.1 L870.1,93.6 L872.9,92.3 L875.6,91.0 L878.3,89.8 L881.0,88.6 L883.6,87.5 L886.3,86.6 L888.9,85.7 L891.4,84.9 L894.0,84.2 L896.6,83.6 L899.1,83.1 L901.6,82.8 L904.2,82.5 L906.7,82.4 L909.3,82.3 L911.8,82.4 L914.4,82.6 L917.0,82.9 L919.6,83.3 L922.3,83.9 L925.0,84.5" fill="none" stroke="#ff1c00" stroke-width="1.389" stroke-dasharray="1.389 2.292"/>
<path d="M526.2,320.3 L524.7,317.4 L523.3,314.6 L522.0,311.7 L520.8,308.9 L519.6,306.0 L518.6,303.2 L517.6,300.3 L516.8,297.5 L516.0,294.7 L515.3,291.8 L514.7,289.0 L514.2,286.1 L513.7,283.3 L513.4,280.5 L513.2,277.6 L513.0,274.8 L512.9,272.0 L512.9,269.2 L513.0,266.3 L513.2,263.5 L513.5,260.7 L513.9,257.9 L514.3,255.1 L514.8,252.3 L515.4,249.5 L516.1,246.7 L516.9,244.0 L517.8,241.2 L518.7,238.4 L519.7,235.7 L520.8,232.9 L521.9,230.2 L523.2,227.4 L524.5,224.7 L525.8,222.0 L527.3,219.3 L528.8,216.6 L530.4,213.9 L532.0,211.2 L533.7,208.6 L535.4,205.9 L537.2,203.3 L539.1,200.7 L541.0,198.1 L543.0,195.5 L545.0,192.9 L547.0,190.3 L549.1,187.8 L551.2,185.3 L553.4,182.8 L555.5,180.3 L557.7,177.8 L560.0,175.4 L562.2,173.0 L564.4,170.6 L566.7,168.2 L568.9,165.9 L571.2,163.6 L573.4,161.3 L575.6,159.0 L577.8,156.8 L580.0,154.7 L582.1,152.5 L584.2,150.4 L586.2,148.4 L588.2,146.4 L590.1,144.4 L591.9,142.5 L593.6,140.7 L595.2,138.9 L596.7,137.1 L598.1,135.4 L599.4,133.8 L600.5,132.2 L601.4,130.8 L602.2,129.3 L602.8,128.0M1200.7,126.7 L1194.5,125.6 L1188.5,124.5 L1182.8,123.4 L1177.2,122.5 L1171.9,121.7 L1166.9,121.0 L1162.1,120.3 L1157.5,119.8 L1153.2,119.4 L1149.2,119.0 L1145.4,118.8 L1141.9,118.7 L1138.6,118.6 L1135.6,118.7 L1132.8,118.9 L1130.2,119.2 L1127.9,119.6 L1125.8,120.1 L1123.9,120.7 L1122.2,121.4 L1120.8,122.2" fill="none" stroke="#ffb10d" stroke-width="1.389" stroke-dasharray="1.389 2.292"/>
<path d="M526.7,310.0 L525.2,307.6 L523.8,305.2 L522.4,302.9 L521.1,300.5 L519.9,298.1 L518.7,295.8 L517.6,293.4 L516.5,291.0 L515.5,288.7 L514.6,286.3 L513.7,283.9 L512.9,281.6 L512.1,279.2 L511.4,276.9 L510.8,274.6 L510.2,272.2 L509.7,269.9 L509.3,267.6 L508.9,265.2 L508.5,262.9 L508.2,260.6 L508.0,258.3 L507.8,256.0 L507.7,253.7 L507.6,251.4 L507.6,249.2 L507.7,246.9 L507.7,244.6 L507.9,242.4 L508.1,240.1 L508.3,237.9 L508.6,235.7 L508.9,233.5 L509.3,231.3 L509.7,229.1 L510.1,226.9 L510.6,224.7 L511.2,222.6 L511.7,220.4 L512.3,218.3 L513.0,216.2 L513.6,214.1 L514.3,212.0 L515.1,209.9 L515.8,207.9 L516.6,205.8 L517.4,203.8 L518.2,201.8 L519.0,199.8 L519.8,197.8 L520.7,195.9 L521.5,194.0 L522.4,192.1 L523.2,190.2 L524.1,188.4 L524.9,186.5 L525.8,184.7 L526.6,183.0 L527.4,181.2 L528.2,179.5 L529.0,177.8 L529.7,176.1 L530.4,174.5 L531.1,172.9 L531.7,171.4 L532.3,169.8 L532.8,168.3 L533.3,166.9 L533.7,165.5 L534.0,164.1 L534.3,162.8 L534.5,161.5 L534.6,160.2 L534.6,159.0 L534.6,157.9 L534.4,156.8 L534.1,155.7 L533.8,154.7M1270.1,153.8 L1265.1,152.9 L1260.2,152.0 L1255.4,151.2 L1250.7,150.5 L1246.2,149.8 L1241.9,149.2 L1237.6,148.6 L1233.5,148.1 L1229.5,147.7 L1225.7,147.3 L1222.0,147.0 L1218.5,146.7 L1215.1,146.5 L1211.8,146.4 L1208.7,146.3 L1205.8,146.3 L1202.9,146.4 L1200.2,146.5 L1197.6,146.7 L1195.2,146.9" fill="none" stroke="#ffb10d" stroke-width="1.389" stroke-dasharray="1.389 2.292"/>
<path d="M561.3,319.5 L562.3,316.0 L563.4,312.4 L564.7,308.9 L566.0,305.3 L567.5,301.8 L569.1,298.2 L570.8,294.7 L572.7,291.1 L574.6,287.6 L576.7,284.1 L578.9,280.5 L581.2,277.0 L583.6,273.4 L586.2,269.9 L588.8,266.4 L591.6,262.8 L594.5,259.3 L597.5,255.8 L600.6,252.3 L603.8,248.7 L607.1,245.2 L610.5,241.7 L614.0,238.2 L617.6,234.6 L621.3,231.1 L625.1,227.6 L629.0,224.1 L633.0,220.6 L637.1,217.1 L641.3,213.6 L645.6,210.1 L649.9,206.6 L654.4,203.1 L658.9,199.7 L663.5,196.2 L668.1,192.7 L672.9,189.2 L677.7,185.8 L682.6,182.3 L687.6,178.9 L692.6,175.5 L697.7,172.0 L702.8,168.6 L708.0,165.2 L713.3,161.8 L718.6,158.4 L723.9,155.1 L729.3,151.7 L734.7,148.4 L740.2,145.0 L745.7,141.7 L751.2,138.4 L756.7,135.2 L762.3,131.9 L767.9,128.7 L773.4,125.5 L779.0,122.4 L784.6,119.2 L790.1,116.1 L795.7,113.1 L801.2,110.1 L806.7,107.1 L812.1,104.2 L817.5,101.4 L822.9,98.6 L828.2,95.9 L833.4,93.3 L838.5,90.8 L843.5,88.5 L848.4,86.2 L853.2,84.1 L857.9,82.1 L862.4,80.3 L866.8,78.7 L871.1,77.4 L875.2,76.2 L879.2,75.3 L883.1,74.6 L886.9,74.2 L890.6,74.1 L894.2,74.3 L897.8,74.7 L901.3,75.5 L904.9,76.4 L908.4,77.6 L912.0,79.1 L915.7,80.7 L919.3,82.5 L923.0,84.5 L926.8,86.7 L930.6,89.0 L934.5,91.4 L938.4,93.9 L942.4,96.5 L946.4,99.2 L950.4,102.0 L954.5,104.8 L958.6,107.7 L962.7,110.7" fill="none" stroke="#ffb10d" stroke-width="1.389" stroke-dasharray="1.389 2.292"/>
<path d="M533.3,318.7 L534.3,316.3 L535.4,313.8 L536.5,311.4 L537.7,308.9 L538.9,306.5 L540.2,304.0 L541.6,301.6 L543.0,299.2 L544.5,296.7 L546.1,294.3 L547.7,291.8 L549.4,289.4 L551.1,287.0 L552.9,284.5 L554.8,282.1 L556.7,279.6 L558.6,277.2 L560.7,274.8 L562.8,272.3 L564.9,269.9 L567.1,267.5 L569.4,265.1 L571.7,262.6 L574.0,260.2 L576.5,257.8 L578.9,255.4 L581.5,252.9 L584.1,250.5 L586.7,248.1 L589.4,245.7 L592.1,243.3 L594.9,240.9 L597.7,238.5 L600.6,236.1 L603.6,233.7 L606.5,231.3 L609.6,228.9 L612.6,226.5 L615.7,224.1 L618.9,221.7 L622.1,219.3 L625.4,216.9 L628.6,214.6 L632.0,212.2 L635.3,209.8 L638.7,207.5 L642.2,205.1 L645.7,202.8 L649.2,200.4 L652.7,198.1 L656.3,195.8 L659.9,193.4 L663.6,191.1 L667.2,188.8 L670.9,186.5 L674.7,184.2 L678.4,181.9 L682.2,179.6 L686.0,177.3 L689.9,175.0 L693.7,172.8 L697.6,170.5 L701.5,168.3 L705.4,166.1 L709.3,163.8 L713.2,161.6 L717.2,159.4 L721.1,157.2 L725.1,155.1 L729.1,152.9 L733.1,150.8 L737.1,148.6 L741.0,146.5 L745.0,144.4 L749.0,142.4 L753.0,140.3 L757.0,138.3 L761.0,136.3 L764.9,134.3 L768.9,132.3 L772.8,130.4 L776.7,128.5 L780.6,126.6 L784.5,124.7 L788.4,122.9 L792.2,121.1 L796.0,119.4 L799.7,117.6 L803.5,116.0 L807.2,114.3 L810.8,112.7 L814.5,111.2 L818.0,109.7 L821.6,108.3 L825.1,106.9 L828.5,105.6 L831.9,104.3 L835.2,103.1 L838.5,102.0" fill="none" stroke="#ffb10d" stroke-width="1.389" stroke-dasharray="1.389 2.292"/>
<path d="M517.5,317.5 L517.2,314.8 L517.0,312.2 L516.8,309.5 L516.8,306.9 L516.8,304.2 L516.9,301.6 L517.0,298.9 L517.3,296.3 L517.6,293.6 L518.0,291.0 L518.5,288.3 L519.0,285.6 L519.7,283.0 L520.4,280.3 L521.2,277.7 L522.0,275.0 L523.0,272.4 L524.0,269.7 L525.1,267.1 L526.3,264.4 L527.5,261.8 L528.8,259.1 L530.2,256.5 L531.7,253.8 L533.2,251.2 L534.9,248.5 L536.6,245.9 L538.3,243.2 L540.2,240.6 L542.1,237.9 L544.1,235.3 L546.1,232.6 L548.3,230.0 L550.5,227.3 L552.7,224.7 L555.1,222.0 L557.5,219.4 L559.9,216.8 L562.5,214.1 L565.1,211.5 L567.8,208.8 L570.5,206.2 L573.3,203.5 L576.2,200.9 L579.1,198.3 L582.1,195.6 L585.2,193.0 L588.3,190.4 L591.5,187.7 L594.8,185.1 L598.1,182.5 L601.4,179.9 L604.8,177.2 L608.3,174.6 L611.8,172.0 L615.4,169.4 L619.1,166.7 L622.8,164.1 L626.5,161.5 L630.3,158.9 L634.1,156.3 L638.0,153.7 L642.0,151.1 L645.9,148.5 L650.0,145.9 L654.0,143.3 L658.1,140.7 L662.3,138.1 L666.5,135.5 L670.7,132.9 L674.9,130.4 L679.2,127.8 L683.5,125.2 L687.9,122.7 L692.3,120.1 L696.7,117.6 L701.1,115.1 L705.5,112.5 L710.0,110.0 L714.4,107.5 L718.9,105.0 L723.4,102.6 L727.9,100.1 L732.4,97.6 L736.8,95.2 L741.3,92.8 L745.7,90.4 L750.1,88.0 L754.5,85.7 L758.8,83.3 L763.0,81.1 L767.2,78.8 L771.3,76.6 L775.3,74.5 L779.1,72.4 L782.8,70.3 L786.4,68.4 L789.7,66.5 L792.7,64.7" fill="none" stroke="#ffb10d" stroke-width="1.389" stroke-dasharray="1.389 2.292"/>
<path d="M833.3,200.7 L833.6,198.2 L833.9,195.7 L834.2,193.2 L834.6,190.8 L834.9,188.3 L835.3,185.8 L835.7,183.3 L836.0,180.8 L836.4,178.3 L836.8,175.8 L837.3,173.4 L837.7,170.9 L838.1,168.4 L838.6,165.9 L839.0,163.5 L839.5,161.0 L840.0,158.5 L840.5,156.0 L841.0,153.6 L841.5,151.1 L842.0,148.6 L842.6,146.2 L843.1,143.7 L843.6,141.2 L844.2,138.8 L844.8,136.3 L845.4,133.9 L845.9,131.4 L846.5,129.0 L847.1,126.5 L847.8,124.1 L848.4,121.7 L849.0,119.2 L849.6,116.8 L850.3,114.4 L850.9,111.9 L851.6,109.5 L852.2,107.1 L852.9,104.7 L853.5,102.3 L854.2,99.9 L854.9,97.6 L855.5,95.2 L856.2,92.8 L856.9,90.5 L857.6,88.2 L858.2,85.8 L858.9,83.5 L859.5,81.3 L860.2,79.0 L860.8,76.8 L861.4,74.5 L862.0,72.4 L862.6,70.2 L863.1,68.1 L863.6,66.1 L864.0,64.1 L864.4,62.2 L864.7,60.3 L864.9,58.5 L865.0,56.9 L864.9,55.4 L864.7,54.0 L864.2,52.8 L863.4,51.8 L862.2,51.0 L860.7,50.4 L858.7,50.2 L856.2,50.2 L853.2,50.4 L849.6,50.9 L845.5,51.7 L840.9,52.7 L835.8,53.9 L830.3,55.2 L824.4,56.7 L818.2,58.4 L811.7,60.1 L805.0,62.0 L798.1,63.9 L790.9,65.9 L783.7,67.9 L776.3,70.0 L768.8,72.2 L761.2,74.3 L753.6,76.6 L745.8,78.8 L738.1,81.0 L730.3,83.3 L722.4,85.6 L714.6,87.9M1096.9,90.3 L1102.9,92.6 L1108.9,95.0 L1114.9,97.3 L1120.9,99.7 L1126.8,102.1 L1132.8,104.5 L1138.7,106.9" fill="none" stroke="#00fa72" stroke-width="1.389" stroke-dasharray="1.389 2.292"/>
<path d="M449.2,252.5 L452.1,250.4 L455.1,248.2 L458.2,246.1 L461.3,243.9 L464.4,241.8 L467.6,239.7 L470.9,237.5 L474.2,235.4 L477.6,233.3 L481.0,231.1 L484.5,229.0 L488.0,226.9 L491.6,224.8 L495.2,222.7 L498.9,220.5 L502.6,218.4 L506.4,216.3 L510.2,214.2 L514.0,212.1 L517.9,210.0 L521.9,207.9 L525.9,205.9 L529.9,203.8 L534.0,201.7 L538.1,199.6 L542.2,197.6 L546.4,195.5 L550.6,193.4 L554.9,191.4 L559.2,189.3 L563.5,187.3 L567.8,185.3 L572.2,183.2 L576.6,181.2 L581.1,179.2 L585.5,177.2 L590.0,175.2 L594.5,173.2 L599.0,171.2 L603.6,169.2 L608.2,167.2 L612.7,165.3 L617.3,163.3 L622.0,161.4 L626.6,159.5 L631.2,157.6 L635.9,155.6 L640.5,153.7 L645.2,151.9 L649.8,150.0 L654.5,148.1 L659.2,146.3 L663.8,144.5 L668.5,142.7 L673.1,140.9 L677.8,139.1 L682.4,137.3 L687.0,135.6 L691.6,133.9 L696.2,132.2 L700.7,130.5 L705.2,128.9 L709.7,127.2 L714.2,125.6 L718.6,124.1 L723.0,122.5 L727.4,121.0 L731.7,119.5 L736.0,118.1 L740.2,116.6 L744.4,115.3 L748.5,113.9 L752.6,112.6 L756.6,111.4 L760.5,110.1 L764.4,109.0 L768.2,107.8 L772.0,106.8 L775.6,105.7 L779.2,104.8 L782.7,103.8 L786.1,103.0 L789.5,102.2 L792.7,101.4 L795.9,100.8 L799.0,100.1 L802.0,99.6 L804.9,99.1 L807.7,98.7 L810.4,98.4 L813.1,98.1 L815.6,97.9 L818.1,97.8 L820.5,97.7 L822.8,97.8 L825.0,97.9 L827.2,98.0 L829.3,98.3 L831.3,98.6" fill="none" stroke="#59d100" stroke-width="1.389" stroke-dasharray="1.389 2.292"/>
<path d="M714.0,241.5 h6.90 M717.5,238.1 v6.90" stroke="#ff0000" stroke-width="1.39" fill="none"/>
<path d="M712.6,242.8 h6.90 M716.1,239.4 v6.90" stroke="#ff0000" stroke-width="1.39" fill="none"/>
<path d="M729.8,238.7 h6.90 M733.3,235.2 v6.90" stroke="#ff0000" stroke-width="1.39" fill="none"/>
<path d="M727.5,239.0 h6.90 M731.0,235.6 v6.90" stroke="#ff0000" stroke-width="1.39" fill="none"/>
<path d="M725.5,239.3 h6.90 M729.0,235.9 v6.90" stroke="#ff0000" stroke-width="1.39" fill="none"/>
<path d="M723.0,239.5 h6.90 M726.5,236.1 v6.90" stroke="#ff0000" stroke-width="1.39" fill="none"/>
<path d="M720.5,240.0 h6.90 M724.0,236.6 v6.90" stroke="#ff0000" stroke-width="1.39" fill="none"/>
<path d="M704.5,239.0 h6.90 M708.0,235.6 v6.90" stroke="#ff0000" stroke-width="1.39" fill="none"/>
<path d="M634.8,260.6 h6.90 M638.3,257.2 v6.90" stroke="#ff0000" stroke-width="1.39" fill="none"/>
<path d="M653.2,266.7 h6.90 M656.7,263.2 v6.90" stroke="#ff0000" stroke-width="1.39" fill="none"/>
<path d="M655.4,266.1 h6.90 M658.9,262.7 v6.90" stroke="#ff0000" stroke-width="1.39" fill="none"/>
<path d="M522.8,320.3 h6.90 M526.2,316.9 v6.90" stroke="#ff0000" stroke-width="1.39" fill="none"/>
<path d="M523.2,310.0 h6.90 M526.7,306.6 v6.90" stroke="#ff0000" stroke-width="1.39" fill="none"/>
<path d="M557.8,319.5 h6.90 M561.3,316.1 v6.90" stroke="#ff0000" stroke-width="1.39" fill="none"/>
<path d="M529.8,318.7 h6.90 M533.3,315.2 v6.90" stroke="#ff0000" stroke-width="1.39" fill="none"/>
<path d="M514.0,317.5 h6.90 M517.5,314.1 v6.90" stroke="#ff0000" stroke-width="1.39" fill="none"/>
<path d="M829.8,200.7 h6.90 M833.3,197.2 v6.90" stroke="#ff0000" stroke-width="1.39" fill="none"/>
<path d="M445.8,252.5 h6.90 M449.2,249.1 v6.90" stroke="#ff0000" stroke-width="1.39" fill="none"/>
<path d="M417.1,246.0 L415.1,248.1 L413.3,250.2 L411.8,252.2 L410.6,254.1 L409.7,256.0 L409.1,257.8 L408.7,259.5 L408.6,261.1 L408.8,262.6 L409.3,264.0 L410.0,265.2 L410.9,266.3 L412.1,267.2 L413.4,268.0 L415.0,268.6 L416.7,269.0 L418.6,269.2 L420.6,269.3 L422.7,269.2 L425.0,269.0 L427.3,268.6 L429.8,268.0 L432.2,267.2 L434.8,266.3 L437.4,265.2 L440.0,264.0 L442.6,262.6 L445.3,261.1 L447.9,259.5 L450.5,257.8 L453.1,256.0 L455.6,254.1 L458.1,252.2 L460.5,250.2 L462.8,248.1 L465.0,246.0 L467.1,244.0 L469.0,241.9 L470.8,239.8 L472.5,237.8 L473.9,235.9 L475.2,234.0 L476.3,232.1 L477.1,230.4 L477.7,228.8 L478.0,227.4 L478.0,226.0 L477.8,224.9 L477.3,223.8 L476.5,223.0 L475.4,222.3 L474.0,221.9 L472.3,221.6 L470.4,221.5 L468.2,221.6 L465.7,221.9 L463.0,222.3 L460.2,223.0 L457.1,223.8 L453.9,224.9 L450.6,226.0 L447.3,227.4 L443.9,228.8 L440.5,230.4 L437.1,232.1 L433.8,234.0 L430.6,235.9 L427.5,237.8 L424.6,239.8 L421.9,241.9 L419.4,244.0 L417.1,246.0Z" fill="none" stroke="#59d100" stroke-width="1.75"/>
<path d="M513.3,314.4 L513.3,316.5 L513.6,318.6 L514.0,320.7 L514.7,322.7 L515.6,324.6 L516.6,326.5 L517.9,328.3 L519.4,329.9 L521.0,331.5 L522.7,332.9 L524.6,334.2 L526.5,335.3 L528.5,336.3 L530.6,337.1 L532.7,337.7 L534.9,338.2 L537.0,338.5 L539.1,338.6 L541.2,338.5 L543.3,338.2 L545.2,337.7 L547.1,337.1 L548.9,336.3 L550.6,335.3 L552.2,334.2 L553.7,332.9 L555.1,331.5 L556.3,329.9 L557.5,328.3 L558.5,326.5 L559.3,324.6 L560.1,322.7 L560.7,320.7 L561.1,318.6 L561.5,316.5 L561.7,314.4 L561.7,312.3 L561.6,310.3 L561.4,308.2 L561.0,306.2 L560.5,304.3 L559.9,302.4 L559.1,300.6 L558.1,298.9 L557.1,297.4 L555.9,295.9 L554.5,294.6 L553.1,293.5 L551.5,292.5 L549.8,291.7 L548.0,291.1 L546.0,290.6 L544.0,290.3 L542.0,290.2 L539.8,290.3 L537.7,290.6 L535.5,291.1 L533.3,291.7 L531.1,292.5 L529.0,293.5 L526.9,294.6 L524.9,295.9 L523.0,297.4 L521.2,298.9 L519.5,300.6 L518.1,302.4 L516.7,304.3 L515.6,306.2 L514.7,308.2 L514.0,310.3 L513.6,312.3 L513.3,314.4Z" fill="none" stroke="#ffb10d" stroke-width="1.75"/>
<path d="M629.9,266.4 L629.1,268.5 L628.6,270.5 L628.4,272.6 L628.3,274.5 L628.5,276.5 L628.9,278.3 L629.5,280.0 L630.3,281.7 L631.4,283.2 L632.5,284.6 L633.9,285.8 L635.4,286.9 L637.0,287.9 L638.8,288.6 L640.7,289.3 L642.6,289.7 L644.6,290.0 L646.7,290.1 L648.8,290.0 L651.0,289.7 L653.1,289.3 L655.3,288.6 L657.4,287.9 L659.5,286.9 L661.6,285.8 L663.6,284.6 L665.5,283.2 L667.3,281.7 L669.1,280.0 L670.7,278.3 L672.3,276.5 L673.7,274.5 L675.1,272.6 L676.2,270.5 L677.3,268.5 L678.2,266.4 L678.9,264.3 L679.5,262.2 L680.0,260.1 L680.2,258.1 L680.3,256.1 L680.2,254.2 L680.0,252.4 L679.5,250.7 L678.9,249.1 L678.1,247.6 L677.2,246.3 L676.0,245.1 L674.7,244.1 L673.2,243.3 L671.6,242.6 L669.8,242.1 L667.9,241.8 L665.8,241.7 L663.7,241.8 L661.4,242.1 L659.1,242.6 L656.7,243.3 L654.3,244.1 L651.9,245.1 L649.5,246.3 L647.1,247.6 L644.8,249.1 L642.6,250.7 L640.4,252.4 L638.4,254.2 L636.5,256.1 L634.8,258.1 L633.3,260.1 L631.9,262.2 L630.8,264.3 L629.9,266.4Z" fill="none" stroke="#ff1c00" stroke-width="1.75"/>
<path d="M698.4,240.3 L697.6,242.4 L697.0,244.5 L696.6,246.5 L696.5,248.5 L696.6,250.4 L696.8,252.2 L697.3,253.9 L698.0,255.5 L698.9,257.0 L700.0,258.4 L701.3,259.6 L702.7,260.7 L704.3,261.6 L706.0,262.4 L707.8,263.0 L709.7,263.4 L711.7,263.7 L713.8,263.8 L715.9,263.7 L718.0,263.4 L720.2,263.0 L722.4,262.4 L724.6,261.6 L726.8,260.7 L728.9,259.6 L731.0,258.4 L733.1,257.0 L735.0,255.5 L736.9,253.9 L738.7,252.2 L740.3,250.4 L741.9,248.5 L743.3,246.5 L744.6,244.5 L745.8,242.4 L746.8,240.3 L747.6,238.2 L748.3,236.1 L748.8,234.0 L749.1,232.0 L749.3,230.0 L749.2,228.1 L749.0,226.3 L748.6,224.5 L748.0,222.9 L747.3,221.4 L746.3,220.1 L745.2,218.9 L743.9,217.9 L742.4,217.0 L740.8,216.3 L739.0,215.8 L737.1,215.5 L735.0,215.4 L732.9,215.5 L730.6,215.8 L728.3,216.3 L725.9,217.0 L723.5,217.9 L721.1,218.9 L718.7,220.1 L716.3,221.4 L713.9,222.9 L711.6,224.5 L709.5,226.3 L707.4,228.1 L705.5,230.0 L703.7,232.0 L702.1,234.0 L700.7,236.1 L699.4,238.2 L698.4,240.3Z" fill="none" stroke="#dc11ff" stroke-width="1.75"/>
<path d="M812.2,201.0 L811.7,203.1 L811.5,205.1 L811.5,207.1 L811.6,209.0 L812.0,210.9 L812.5,212.7 L813.3,214.4 L814.2,216.0 L815.3,217.4 L816.5,218.7 L817.9,219.9 L819.5,221.0 L821.2,221.9 L822.9,222.6 L824.8,223.2 L826.8,223.6 L828.8,223.9 L830.9,224.0 L833.0,223.9 L835.2,223.6 L837.3,223.2 L839.4,222.6 L841.5,221.9 L843.6,221.0 L845.6,219.9 L847.6,218.7 L849.4,217.4 L851.2,216.0 L852.8,214.4 L854.4,212.7 L855.8,210.9 L857.1,209.0 L858.2,207.1 L859.2,205.1 L860.0,203.1 L860.6,201.0 L861.1,198.9 L861.3,196.8 L861.4,194.7 L861.4,192.6 L861.1,190.6 L860.7,188.7 L860.1,186.8 L859.3,185.0 L858.4,183.4 L857.3,181.8 L856.0,180.5 L854.6,179.2 L853.0,178.1 L851.4,177.3 L849.6,176.6 L847.7,176.0 L845.7,175.7 L843.6,175.6 L841.5,175.7 L839.3,176.0 L837.1,176.6 L834.9,177.3 L832.6,178.1 L830.5,179.2 L828.3,180.5 L826.2,181.8 L824.2,183.4 L822.3,185.0 L820.5,186.8 L818.8,188.7 L817.3,190.6 L815.9,192.6 L814.7,194.7 L813.7,196.8 L812.8,198.9 L812.2,201.0Z" fill="none" stroke="#00fa72" stroke-width="1.75"/>
<path d="M693.2,95.0 L695.2,94.3 L697.3,93.6 L699.3,92.9 L701.4,92.2 L703.5,91.5 L705.5,90.8 L707.6,90.1 L709.7,89.4 L711.8,88.7 L713.8,88.0 L715.9,87.3" fill="none" stroke="#666666" stroke-width="1.389"/>
<path d="M710.0,103.7 L722.1,98.9 L734.4,94.1 L746.7,89.3 L759.1,84.6 L771.5,79.8 L784.0,75.1 L796.5,70.4 L808.9,65.7 L821.3,61.1 L833.6,56.6 L845.6,52.2" fill="none" stroke="#666666" stroke-width="1.389"/>
<path d="M845.6,52.2 L844.0,57.7 L837.8,65.7 L829.7,74.9 L820.7,84.8 L811.5,95.1 L802.3,105.5 L793.2,116.2 L784.4,126.9 L775.9,137.7 L767.7,148.5 L760.0,159.4" fill="none" stroke="#666666" stroke-width="1.389"/>
<path d="M726.7,149.4 L727.6,148.4 L728.5,147.5 L729.4,146.5 L730.3,145.6 L731.2,144.6 L732.1,143.7 L733.0,142.7 L733.9,141.8 L734.8,140.8 L735.8,139.9 L736.7,138.9" fill="none" stroke="#666666" stroke-width="1.389"/>
<path d="M820.0,117.3 L820.7,118.2 L821.3,119.2 L822.0,120.2 L822.6,121.2 L823.2,122.2 L823.8,123.2 L824.4,124.3 L825.0,125.4 L825.6,126.5 L826.1,127.6 L826.7,128.7" fill="none" stroke="#666666" stroke-width="1.389"/>
<path d="M1067.3,80.7 L1068.5,81.1 L1069.6,81.4 L1070.8,81.8 L1071.9,82.2 L1073.1,82.5 L1074.2,82.9 L1075.4,83.2 L1076.5,83.6 L1077.7,84.0 L1078.8,84.3 L1080.0,84.7" fill="none" stroke="#666666" stroke-width="1.389"/>
<path d="M1039.3,100.0 L1039.6,99.4 L1039.9,98.8 L1040.3,98.2 L1040.7,97.7 L1041.2,97.2 L1041.8,96.7 L1042.4,96.2 L1043.0,95.8 L1043.7,95.4 L1044.5,95.0 L1045.3,94.7" fill="none" stroke="#666666" stroke-width="1.389"/>
<path d="M1054.0,134.0 L1054.3,134.6 L1054.6,135.2 L1054.9,135.8 L1055.2,136.4 L1055.5,137.0 L1055.8,137.6 L1056.1,138.2 L1056.4,138.9 L1056.7,139.5 L1057.0,140.1 L1057.3,140.7" fill="none" stroke="#666666" stroke-width="1.389"/>
<path d="M1020.0,150.7 L1020.8,149.8 L1021.6,149.0 L1022.4,148.1 L1023.2,147.3 L1024.0,146.5 L1024.9,145.7 L1025.7,144.9 L1026.6,144.2 L1027.5,143.4 L1028.4,142.7 L1029.3,142.0" fill="none" stroke="#666666" stroke-width="1.389"/>
<path d="M912.4,37.8 L912.4,38.5 L912.3,39.2 L912.3,40.0 L912.4,40.8 L912.4,41.6 L912.5,42.4 L912.6,43.2 L912.6,44.1 L912.7,44.9 L912.8,45.8 L912.9,46.7" fill="none" stroke="#666666" stroke-width="1.389"/>
<path d="M962.2,55.6 L962.2,56.2 L962.4,56.9 L962.6,57.5 L962.9,58.3 L963.2,59.1 L963.7,59.9 L964.2,60.7 L964.7,61.6 L965.3,62.5 L966.0,63.4 L966.7,64.4" fill="none" stroke="#666666" stroke-width="1.389"/>
<path d="M996.0,58.0 L998.0,59.0 L1000.1,60.1 L1002.2,61.2 L1004.5,62.4 L1006.8,63.5 L1009.2,64.7 L1011.7,65.9 L1014.2,67.2 L1016.8,68.4 L1019.4,69.7 L1022.0,71.0" fill="none" stroke="#666666" stroke-width="1.389"/>
<path d="M908.0,110.7 L907.8,112.3 L907.6,113.8 L907.5,115.4 L907.3,117.0 L907.1,118.6 L906.9,120.1 L906.7,121.7 L906.5,123.3 L906.4,124.8 L906.2,126.4 L906.0,128.0" fill="none" stroke="#666666" stroke-width="1.389"/>
<path d="M893.3,122.7 L894.2,123.1 L895.0,123.5 L895.9,123.9 L896.7,124.3 L897.6,124.7 L898.4,125.1 L899.3,125.5 L900.1,126.0 L901.0,126.4 L901.8,126.8 L902.7,127.3" fill="none" stroke="#666666" stroke-width="1.389"/>
<path d="M896.0,46.7 L896.0,47.9 L896.0,49.1 L896.0,50.3 L896.0,51.5 L896.0,52.7 L896.0,53.9 L896.0,55.1 L896.0,56.3 L896.0,57.6 L896.0,58.8 L896.0,60.0" fill="none" stroke="#666666" stroke-width="1.389"/>
<path d="M794.7,180.0 L795.1,179.2 L795.4,178.3 L795.8,177.5 L796.1,176.6 L796.5,175.8 L796.8,174.9 L797.2,174.1 L797.6,173.2 L798.0,172.4 L798.3,171.5 L798.7,170.7" fill="none" stroke="#666666" stroke-width="1.389"/>
<path d="M756.7,105.3 L756.8,103.5 L756.7,101.8 L756.4,100.2 L755.8,98.8 L755.0,97.5 L753.8,96.4 L752.4,95.4 L750.5,94.6 L748.3,94.0 L745.7,93.6 L742.7,93.3" fill="none" stroke="#dc11ff" stroke-width="1.389"/>
<path d="M705.2,143.3 L704.3,141.9 L703.3,140.6 L702.2,139.3 L701.0,138.1 L699.7,137.0 L698.2,135.9 L696.7,135.0 L695.0,134.1 L693.1,133.3 L691.1,132.6 L689.0,132.0" fill="none" stroke="#dc11ff" stroke-width="1.389"/>
<path d="M940.9,42.9 L944.0,44.3 L947.1,45.8 L950.2,47.2 L953.3,48.7 L956.4,50.1 L959.5,51.6 L962.6,53.0 L965.7,54.5 L968.9,56.0 L972.0,57.4 L975.1,58.9" fill="none" stroke="#dc11ff" stroke-width="1.389"/>
<path d="M1052.0,103.3 L1061.1,108.0 L1070.0,112.7 L1078.9,117.4 L1087.6,122.0 L1096.2,126.7 L1104.8,131.4 L1113.1,136.1 L1121.4,140.8 L1129.5,145.5 L1137.5,150.2 L1145.3,154.9" fill="none" stroke="#dc11ff" stroke-width="1.389"/>
<path d="M1089.3,110.9 L1091.2,111.9 L1093.1,112.9 L1095.0,113.9 L1096.9,114.9 L1098.8,115.9 L1100.7,116.9 L1102.5,118.0 L1104.4,119.0 L1106.3,120.0 L1108.1,121.0 L1110.0,122.0" fill="none" stroke="#dc11ff" stroke-width="1.389"/>
<path d="M1116.0,136.0 L1117.4,136.8 L1118.8,137.6 L1120.1,138.4 L1121.5,139.2 L1122.9,140.0 L1124.2,140.9 L1125.6,141.7 L1127.0,142.5 L1128.3,143.3 L1129.7,144.1 L1131.0,144.9" fill="none" stroke="#dc11ff" stroke-width="1.389"/>
<path d="M1105.3,160.7 L1109.4,163.2 L1113.5,165.6 L1117.6,168.1 L1121.7,170.5 L1125.7,173.0 L1129.6,175.5 L1133.6,178.0 L1137.5,180.5 L1141.4,183.0 L1145.2,185.5 L1149.0,188.0" fill="none" stroke="#dc11ff" stroke-width="1.389"/>
<path d="M771.5,157.3 L773.1,155.3 L774.7,153.2 L776.4,151.2 L778.0,149.2 L779.7,147.2 L781.4,145.1 L783.1,143.1 L784.8,141.1 L786.5,139.1 L788.2,137.0 L790.0,135.0" fill="none" stroke="#dc11ff" stroke-width="1.389"/>
<path d="M881.3,86.0 L882.7,85.6 L884.2,85.2 L885.6,84.8 L887.0,84.5 L888.4,84.2 L889.8,83.9 L891.2,83.7 L892.6,83.5 L894.0,83.3 L895.3,83.1 L896.7,83.0" fill="none" stroke="#ff1c00" stroke-width="1.389"/>
<path d="M890.0,84.0 L894.4,82.9 L898.7,82.1 L903.0,81.6 L907.2,81.4 L911.6,81.6 L915.9,82.1 L920.4,82.9 L925.0,84.0 L929.6,85.4 L934.4,87.1 L939.3,89.0" fill="none" stroke="#ff1c00" stroke-width="1.389"/>
<path d="M925.0,84.5 L927.2,85.1 L929.5,85.7 L931.7,86.4 L934.0,87.2 L936.4,88.0 L938.7,88.9 L941.1,89.9 L943.6,90.8 L946.0,91.9 L948.5,93.0 L951.0,94.1" fill="none" stroke="#ff1c00" stroke-width="1.389"/>
<path d="M1122.0,122.7 L1121.4,123.2 L1120.8,123.8 L1120.3,124.4 L1119.9,125.0 L1119.5,125.6 L1119.1,126.3 L1118.8,127.0 L1118.5,127.7 L1118.3,128.4 L1118.1,129.2 L1118.0,130.0" fill="none" stroke="#ffb10d" stroke-width="1.389"/>
<path d="M1196.0,147.3 L1194.7,147.5 L1193.4,147.6 L1192.2,147.8 L1191.0,148.0 L1189.9,148.3 L1188.7,148.5 L1187.7,148.8 L1186.6,149.0 L1185.6,149.3 L1184.6,149.7 L1183.7,150.0" fill="none" stroke="#ffb10d" stroke-width="1.389"/>
<path d="M962.7,110.7 L963.5,111.3 L964.3,111.9 L965.0,112.5 L965.8,113.1 L966.6,113.7 L967.4,114.3 L968.2,114.9 L969.0,115.5 L969.7,116.1 L970.5,116.7 L971.3,117.3" fill="none" stroke="#ffb10d" stroke-width="1.389"/>
<path d="M838.5,102.0 L840.2,101.6 L841.8,101.1 L843.4,100.7 L845.0,100.3 L846.6,100.0 L848.2,99.6 L849.7,99.3 L851.3,99.0 L852.8,98.8 L854.3,98.5 L855.8,98.3" fill="none" stroke="#ffb10d" stroke-width="1.389"/>
<path d="M792.7,64.7 L795.1,63.2 L797.3,61.8 L799.1,60.6M1003.5,59.4 L998.3,58.4 L993.5,57.5 L989.1,56.8 L985.3,56.3 L982.0,55.9 L979.2,55.8 L976.9,55.8" fill="none" stroke="#ffb10d" stroke-width="1.389"/>
<path d="M1138.7,106.9 L1139.5,107.3 L1140.3,107.6 L1141.2,108.0 L1142.0,108.3 L1142.8,108.7 L1143.6,109.1 L1144.4,109.4 L1145.2,109.8 L1146.1,110.2 L1146.9,110.5 L1147.7,110.9" fill="none" stroke="#00fa72" stroke-width="1.389"/>
<path d="M831.3,98.6 L832.0,98.7 L832.7,98.9 L833.3,99.1 L834.0,99.2 L834.6,99.4 L835.3,99.6 L835.9,99.8 L836.6,100.0 L837.2,100.2 L837.8,100.5 L838.4,100.7" fill="none" stroke="#59d100" stroke-width="1.389"/>
<path d="M741.3,93.3 h2.80 M742.7,91.9 v2.80" stroke="#ff6347" stroke-width="1.20" fill="none"/>
<path d="M687.6,132.0 h2.80 M689.0,130.6 v2.80" stroke="#ff6347" stroke-width="1.20" fill="none"/>
<path d="M973.7,58.9 h2.80 M975.1,57.5 v2.80" stroke="#ff6347" stroke-width="1.20" fill="none"/>
<path d="M1143.9,154.9 h2.80 M1145.3,153.5 v2.80" stroke="#ff6347" stroke-width="1.20" fill="none"/>
<path d="M1108.6,122.0 h2.80 M1110.0,120.6 v2.80" stroke="#ff6347" stroke-width="1.20" fill="none"/>
<path d="M1129.6,144.9 h2.80 M1131.0,143.5 v2.80" stroke="#ff6347" stroke-width="1.20" fill="none"/>
<path d="M1147.6,188.0 h2.80 M1149.0,186.6 v2.80" stroke="#ff6347" stroke-width="1.20" fill="none"/>
<path d="M788.6,135.0 h2.80 M790.0,133.6 v2.80" stroke="#ff6347" stroke-width="1.20" fill="none"/>
<path d="M895.3,83.0 h2.80 M896.7,81.6 v2.80" stroke="#ff6347" stroke-width="1.20" fill="none"/>
<path d="M937.9,89.0 h2.80 M939.3,87.6 v2.80" stroke="#ff6347" stroke-width="1.20" fill="none"/>
<path d="M949.6,94.1 h2.80 M951.0,92.7 v2.80" stroke="#ff6347" stroke-width="1.20" fill="none"/>
<path d="M1116.6,130.0 h2.80 M1118.0,128.6 v2.80" stroke="#ff6347" stroke-width="1.20" fill="none"/>
<path d="M1182.3,150.0 h2.80 M1183.7,148.6 v2.80" stroke="#ff6347" stroke-width="1.20" fill="none"/>
<path d="M969.9,117.3 h2.80 M971.3,115.9 v2.80" stroke="#ff6347" stroke-width="1.20" fill="none"/>
<path d="M854.4,98.3 h2.80 M855.8,96.9 v2.80" stroke="#ff6347" stroke-width="1.20" fill="none"/>
<path d="M975.5,55.8 h2.80 M976.9,54.4 v2.80" stroke="#ff6347" stroke-width="1.20" fill="none"/>
<path d="M1146.3,110.9 h2.80 M1147.7,109.5 v2.80" stroke="#ff6347" stroke-width="1.20" fill="none"/>
<path d="M837.0,100.7 h2.80 M838.4,99.3 v2.80" stroke="#ff6347" stroke-width="1.20" fill="none"/>
<g font-family="'DejaVu Sans','Liberation Sans',sans-serif" font-size="11.11" fill="#fff" text-anchor="middle">
<text x="441.7" y="248.9">LEO</text>
<text x="537.5" y="316.9">AMO</text>
<text x="654.2" y="269.4">NOO</text>
<text x="722.9" y="243.1">NTA</text>
<text x="836.7" y="203.3">AND</text>
</g>
<g font-family="'DejaVu Sans Mono','Liberation Mono',monospace" font-size="13.889" fill="#fff">
<text x="316.1" y="30.0" xml:space="preserve">DK000A</text>
<text x="316.1" y="43.0" xml:space="preserve">Beg: 20251115 17:05:27 (sol = 233.23°)</text>
<text x="316.1" y="56.7" xml:space="preserve">End: 20251116 05:35:15 (sol = 233.76°)</text>
<text x="316.1" y="69.0" xml:space="preserve">--------------------------------------</text>
<text x="316.1" y="82.0" xml:space="preserve">...: 18</text>
<text x="316.1" y="95.0" xml:space="preserve">NTA: 8</text>
<text x="316.1" y="108.1" xml:space="preserve">AMO: 5</text>
<text x="316.1" y="121.1" xml:space="preserve">NOO: 3</text>
<text x="316.1" y="134.2" xml:space="preserve">AND: 1</text>
<text x="316.1" y="147.3" xml:space="preserve">LEO: 1</text>
</g>
<g font-family="'DejaVu Sans','Liberation Sans',sans-serif" font-size="27.78" fill="#4d4d4d" text-anchor="end">
<text transform="translate(149.0,643.0) rotate(-90)">APR</text>
<text transform="translate(294.0,646.0) rotate(-90)">MAY</text>
<text transform="translate(436.0,640.8) rotate(-90)">JUN</text>
<text transform="translate(576.0,641.0) rotate(-90)">JUL</text>
<text transform="translate(723.0,642.0) rotate(-90)">AUG</text>
<text transform="translate(872.0,643.9) rotate(-90)">SEP</text>
<text transform="translate(1017.0,643.4) rotate(-90)">OCT</text>
<text transform="translate(1169.0,644.8) rotate(-90)">NOV</text>
<text transform="translate(1318.4,642.0) rotate(-90)">DEC</text>
<text transform="translate(1469.0,640.0) rotate(-90)">JAN</text>
<text transform="translate(1628.0,644.9) rotate(-90)">FEB</text>
<text transform="translate(1766.0,645.0) rotate(-90)">MAR</text>
</g>
<g fill="none" stroke="#ff0000" stroke-width="1.389" stroke-dasharray="5.139 2.222">
<path d="M1163.4,842.5 V641.6"/>
<path d="M1166.4,842.5 V641.6"/>
</g>
<path d="M106.0,834.0 H129.0" stroke="#ec84ee" stroke-width="4.17" fill="none"/>
<path d="M165.0,834.0 H345.0" stroke="#ec84ee" stroke-width="4.17" fill="none"/>
<path d="M365.8,834.0 H625.0" stroke="#ec84ee" stroke-width="4.17" fill="none"/>
<path d="M635.0,834.0 H785.8" stroke="#ec84ee" stroke-width="4.17" fill="none"/>
<path d="M807.0,834.0 H899.2" stroke="#ec84ee" stroke-width="4.17" fill="none"/>
<path d="M920.0,834.0 H973.0" stroke="#ec84ee" stroke-width="4.17" fill="none"/>
<path d="M983.8,834.0 H1066.0" stroke="#ec84ee" stroke-width="4.17" fill="none"/>
<path d="M1082.0,834.0 H1203.0" stroke="#ec84ee" stroke-width="4.17" fill="none"/>
<path d="M1244.0,834.0 H1326.0" stroke="#ec84ee" stroke-width="4.17" fill="none"/>
<path d="M1337.0,834.0 H1355.0" stroke="#ec84ee" stroke-width="4.17" fill="none"/>
<path d="M1381.0,834.0 H1444.0" stroke="#ec84ee" stroke-width="4.17" fill="none"/>
<path d="M1459.0,834.0 H1511.8" stroke="#ec84ee" stroke-width="4.17" fill="none"/>
<path d="M1522.9,834.0 H1546.8" stroke="#ec84ee" stroke-width="4.17" fill="none"/>
<path d="M1724.2,834.0 H1747.9" stroke="#ec84ee" stroke-width="4.17" fill="none"/>
<path d="M1758.2,834.0 H1781.9" stroke="#ec84ee" stroke-width="4.17" fill="none"/>
<path d="M165.0,818.0 H188.0" stroke="#dc11ff" stroke-width="4.17" fill="none"/>
<path d="M223.0,818.0 H286.0" stroke="#dc11ff" stroke-width="4.17" fill="none"/>
<path d="M312.0,818.0 H340.0" stroke="#dc11ff" stroke-width="4.17" fill="none"/>
<path d="M365.8,818.0 H492.0" stroke="#dc11ff" stroke-width="4.17" fill="none"/>
<path d="M508.0,818.0 H653.8" stroke="#dc11ff" stroke-width="4.17" fill="none"/>
<path d="M704.2,818.0 H737.0" stroke="#dc11ff" stroke-width="4.17" fill="none"/>
<path d="M773.0,818.0 H845.0" stroke="#dc11ff" stroke-width="4.17" fill="none"/>
<path d="M870.8,818.0 H988.0" stroke="#dc11ff" stroke-width="4.17" fill="none"/>
<path d="M1003.0,818.0 H1017.0" stroke="#dc11ff" stroke-width="4.17" fill="none"/>
<path d="M1062.0,818.0 H1213.0" stroke="#dc11ff" stroke-width="4.17" fill="none"/>
<path d="M1244.0,818.0 H1267.0" stroke="#dc11ff" stroke-width="4.17" fill="none"/>
<path d="M1293.0,818.0 H1316.0" stroke="#dc11ff" stroke-width="4.17" fill="none"/>
<path d="M1342.0,818.0 H1365.0" stroke="#dc11ff" stroke-width="4.17" fill="none"/>
<path d="M1386.0,818.0 H1429.0" stroke="#dc11ff" stroke-width="4.17" fill="none"/>
<path d="M1459.0,818.0 H1483.0" stroke="#dc11ff" stroke-width="4.17" fill="none"/>
<path d="M1547.8,818.0 H1571.0" stroke="#dc11ff" stroke-width="4.17" fill="none"/>
<path d="M165.0,801.7 H188.0" stroke="#ff1c00" stroke-width="4.17" fill="none"/>
<path d="M258.0,801.7 H487.0" stroke="#ff1c00" stroke-width="4.17" fill="none"/>
<path d="M508.0,801.7 H615.0" stroke="#ff1c00" stroke-width="4.17" fill="none"/>
<path d="M625.8,801.7 H718.0" stroke="#ff1c00" stroke-width="4.17" fill="none"/>
<path d="M728.8,801.7 H826.0" stroke="#ff1c00" stroke-width="4.17" fill="none"/>
<path d="M949.0,801.7 H1149.0" stroke="#ff1c00" stroke-width="4.17" fill="none"/>
<path d="M1160.0,801.7 H1248.0" stroke="#ff1c00" stroke-width="4.17" fill="none"/>
<path d="M1258.0,801.7 H1444.0" stroke="#ff1c00" stroke-width="4.17" fill="none"/>
<path d="M1459.0,801.7 H1483.0" stroke="#ff1c00" stroke-width="4.17" fill="none"/>
<path d="M1552.0,801.7 H1576.0" stroke="#ff1c00" stroke-width="4.17" fill="none"/>
<path d="M193.8,785.0 H218.0" stroke="#ffb10d" stroke-width="4.17" fill="none"/>
<path d="M321.0,785.0 H506.7" stroke="#ffb10d" stroke-width="4.17" fill="none"/>
<path d="M518.0,785.0 H541.0" stroke="#ffb10d" stroke-width="4.17" fill="none"/>
<path d="M557.0,785.0 H683.0" stroke="#ffb10d" stroke-width="4.17" fill="none"/>
<path d="M807.0,785.0 H831.0" stroke="#ffb10d" stroke-width="4.17" fill="none"/>
<path d="M953.8,785.0 H973.0" stroke="#ffb10d" stroke-width="4.17" fill="none"/>
<path d="M988.0,785.0 H1125.0" stroke="#ffb10d" stroke-width="4.17" fill="none"/>
<path d="M1155.0,785.0 H1218.0" stroke="#ffb10d" stroke-width="4.17" fill="none"/>
<path d="M1244.0,785.0 H1267.0" stroke="#ffb10d" stroke-width="4.17" fill="none"/>
<path d="M1317.0,785.0 H1341.0" stroke="#ffb10d" stroke-width="4.17" fill="none"/>
<path d="M1396.0,785.0 H1419.0" stroke="#ffb10d" stroke-width="4.17" fill="none"/>
<path d="M1464.0,785.0 H1649.9" stroke="#ffb10d" stroke-width="4.17" fill="none"/>
<path d="M340.8,769.0 H370.0" stroke="#fff000" stroke-width="4.17" fill="none"/>
<path d="M410.0,769.0 H448.0" stroke="#fff000" stroke-width="4.17" fill="none"/>
<path d="M469.2,769.0 H492.0" stroke="#fff000" stroke-width="4.17" fill="none"/>
<path d="M527.0,769.0 H546.2" stroke="#fff000" stroke-width="4.17" fill="none"/>
<path d="M562.0,769.0 H590.0" stroke="#fff000" stroke-width="4.17" fill="none"/>
<path d="M616.0,769.0 H649.0" stroke="#fff000" stroke-width="4.17" fill="none"/>
<path d="M959.0,769.0 H988.0" stroke="#fff000" stroke-width="4.17" fill="none"/>
<path d="M1062.0,769.0 H1086.0" stroke="#fff000" stroke-width="4.17" fill="none"/>
<path d="M1101.0,769.0 H1125.0" stroke="#fff000" stroke-width="4.17" fill="none"/>
<path d="M1160.0,769.0 H1194.0" stroke="#fff000" stroke-width="4.17" fill="none"/>
<path d="M1248.0,769.0 H1272.0" stroke="#fff000" stroke-width="4.17" fill="none"/>
<path d="M1425.0,769.0 H1511.8" stroke="#fff000" stroke-width="4.17" fill="none"/>
<path d="M420.0,752.0 H443.0" stroke="#a4ff27" stroke-width="4.17" fill="none"/>
<path d="M532.0,752.0 H556.0" stroke="#a4ff27" stroke-width="4.17" fill="none"/>
<path d="M567.0,752.0 H590.0" stroke="#a4ff27" stroke-width="4.17" fill="none"/>
<path d="M621.0,752.0 H742.0" stroke="#a4ff27" stroke-width="4.17" fill="none"/>
<path d="M969.0,752.0 H1135.0" stroke="#a4ff27" stroke-width="4.17" fill="none"/>
<path d="M1185.0,752.0 H1346.0" stroke="#a4ff27" stroke-width="4.17" fill="none"/>
<path d="M1469.0,752.0 H1493.0" stroke="#a4ff27" stroke-width="4.17" fill="none"/>
<path d="M429.0,736.0 H453.0" stroke="#59d100" stroke-width="4.17" fill="none"/>
<path d="M576.0,736.0 H733.0" stroke="#59d100" stroke-width="4.17" fill="none"/>
<path d="M993.0,736.0 H1105.0" stroke="#59d100" stroke-width="4.17" fill="none"/>
<path d="M1116.0,736.0 H1223.0" stroke="#59d100" stroke-width="4.17" fill="none"/>
<path d="M1263.0,736.0 H1292.0" stroke="#59d100" stroke-width="4.17" fill="none"/>
<path d="M1489.0,736.0 H1512.0" stroke="#59d100" stroke-width="4.17" fill="none"/>
<path d="M591.0,720.0 H615.0" stroke="#00fa72" stroke-width="4.17" fill="none"/>
<path d="M655.0,720.0 H772.0" stroke="#00fa72" stroke-width="4.17" fill="none"/>
<path d="M1072.0,720.0 H1243.0" stroke="#00fa72" stroke-width="4.17" fill="none"/>
<path d="M1263.0,720.0 H1287.0" stroke="#00fa72" stroke-width="4.17" fill="none"/>
<path d="M596.0,703.0 H733.0" stroke="#00e0ff" stroke-width="4.17" fill="none"/>
<path d="M1091.0,703.0 H1120.0" stroke="#00e0ff" stroke-width="4.17" fill="none"/>
<path d="M1199.0,703.0 H1223.0" stroke="#00e0ff" stroke-width="4.17" fill="none"/>
<path d="M1273.0,703.0 H1326.0" stroke="#00e0ff" stroke-width="4.17" fill="none"/>
<path d="M1111.0,687.0 H1135.0" stroke="#000dcd" stroke-width="4.17" fill="none"/>
<g fill="none" stroke="#ffffff" stroke-opacity="0.335" stroke-dashoffset="-0.55" stroke-width="2.083" stroke-dasharray="2.083 3.437">
<path d="M73.8,842.5 V641.6"/>
<path d="M217.8,842.5 V641.6"/>
<path d="M364.7,842.5 V641.6"/>
<path d="M505.0,842.5 V641.6"/>
<path d="M649.8,842.5 V641.6"/>
<path d="M796.8,842.5 V641.6"/>
<path d="M940.0,842.5 V641.6"/>
<path d="M1091.0,842.5 V641.6"/>
<path d="M1239.0,842.5 V641.6"/>
<path d="M1394.0,842.5 V641.6"/>
<path d="M1547.9,842.5 V641.6"/>
<path d="M1686.9,842.5 V641.6"/>
</g>
<g font-family="'DejaVu Sans','Liberation Sans',sans-serif" font-size="11.11" fill="#fff" text-anchor="middle" letter-spacing="-0.45">
<text x="117.5" y="832.0">KSE</text>
<text x="255.0" y="832.0">ETA</text>
<text x="494.2" y="832.0">NZC</text>
<text x="710.7" y="832.0">NDA</text>
<text x="852.7" y="832.0">SPE</text>
<text x="945.5" y="832.0">ARD</text>
<text x="1024.8" y="832.0">EGE</text>
<text x="1142.5" y="832.0">NTA</text>
<text x="1283.8" y="832.0">MON</text>
<text x="1343.3" y="832.0">URS</text>
<text x="1411.8" y="832.0">AHY</text>
<text x="1485.5" y="832.0">GUM</text>
<text x="1535.4" y="832.0">OHY</text>
<text x="1736.0" y="832.0">XHE</text>
<text x="1769.7" y="832.0">EVI</text>
<text x="175.3" y="815.0">AVB</text>
<text x="254.7" y="815.0">ELY</text>
<text x="323.9" y="815.0">CAM</text>
<text x="431.8" y="815.0">SSG</text>
<text x="578.5" y="815.0">PCA</text>
<text x="720.7" y="815.0">AUD</text>
<text x="808.3" y="815.0">AUR</text>
<text x="930.9" y="815.0">DSX</text>
<text x="1009.8" y="815.0">OCU</text>
<text x="1137.2" y="815.0">OER</text>
<text x="1254.8" y="815.0">DKD</text>
<text x="1304.3" y="815.0">DSV</text>
<text x="1353.1" y="815.0">ALY</text>
<text x="1407.5" y="815.0">JLE</text>
<text x="1471.9" y="815.0">SCC</text>
<text x="1558.9" y="815.0">FEV</text>
<text x="176.2" y="799.0">LYR</text>
<text x="372.5" y="799.0">JMC</text>
<text x="558.9" y="799.0">JPE</text>
<text x="671.5" y="799.0">PAU</text>
<text x="774.3" y="799.0">NIA</text>
<text x="1049.8" y="799.0">STA</text>
<text x="1205.5" y="799.0">NOO</text>
<text x="1353.3" y="799.0">COM</text>
<text x="1470.4" y="799.0">NCC</text>
<text x="1563.5" y="799.0">FED</text>
<text x="205.8" y="783.0">HVI</text>
<text x="411.9" y="783.0">ARI</text>
<text x="529.7" y="783.0">SZC</text>
<text x="617.8" y="783.0">CAP</text>
<text x="818.6" y="783.0">NUE</text>
<text x="961.1" y="783.0">OCT</text>
<text x="1059.4" y="783.0">ORI</text>
<text x="1186.5" y="783.0">AMO</text>
<text x="1255.3" y="783.0">DPC</text>
<text x="1328.9" y="783.0">XVI</text>
<text x="1407.8" y="783.0">QUA</text>
<text x="1559.7" y="783.0">AAN</text>
<text x="353.2" y="766.0">TAH</text>
<text x="431.5" y="766.0">JEA</text>
<text x="480.2" y="766.0">JIP</text>
<text x="538.8" y="766.0">PPS</text>
<text x="578.9" y="766.0">ZCS</text>
<text x="632.8" y="766.0">GDR</text>
<text x="970.3" y="766.0">DRA</text>
<text x="1073.3" y="766.0">LUM</text>
<text x="1112.9" y="766.0">RPU</text>
<text x="1176.9" y="766.0">THA</text>
<text x="1259.4" y="766.0">PSU</text>
<text x="1470.7" y="766.0">XCB</text>
<text x="431.5" y="750.0">JRC</text>
<text x="544.2" y="750.0">CAN</text>
<text x="577.9" y="750.0">FAN</text>
<text x="681.3" y="750.0">PER</text>
<text x="1049.4" y="750.0">CTA</text>
<text x="1264.3" y="750.0">HYD</text>
<text x="1481.3" y="750.0">XUM</text>
<text x="441.5" y="734.0">COR</text>
<text x="657.1" y="734.0">SDA</text>
<text x="1049.0" y="734.0">LMI</text>
<text x="1166.5" y="734.0">LEO</text>
<text x="1274.4" y="734.0">EHY</text>
<text x="1499.7" y="734.0">ECV</text>
<text x="602.8" y="717.0">JXA</text>
<text x="715.0" y="717.0">KCG</text>
<text x="1156.8" y="717.0">AND</text>
<text x="1274.8" y="717.0">DAD</text>
<text x="666.4" y="701.0">ERI</text>
<text x="1108.5" y="701.0">SLD</text>
<text x="1211.3" y="701.0">ORS</text>
<text x="1298.9" y="701.0">GEM</text>
<text x="1122.9" y="684.0">KUM</text>
</g>
<g stroke="#fff" stroke-width="2.083" fill="none">
<path d="M112.8,834.0 h8.33 M117.0,829.8 v8.33"/>
<path d="M240.5,834.0 h8.33 M244.7,829.8 v8.33"/>
<path d="M510.5,834.0 h8.33 M514.7,829.8 v8.33"/>
<path d="M706.6,834.0 h8.33 M710.8,829.8 v8.33"/>
<path d="M832.6,834.0 h8.33 M836.8,829.8 v8.33"/>
<path d="M961.6,834.0 h8.33 M965.8,829.8 v8.33"/>
<path d="M985.5,834.0 h8.33 M989.7,829.8 v8.33"/>
<path d="M1115.5,834.0 h8.33 M1119.7,829.8 v8.33"/>
<path d="M1294.6,834.0 h8.33 M1298.8,829.8 v8.33"/>
<path d="M1341.6,834.0 h8.33 M1345.8,829.8 v8.33"/>
<path d="M1412.8,834.0 h8.33 M1417.0,829.8 v8.33"/>
<path d="M1481.4,834.0 h8.33 M1485.6,829.8 v8.33"/>
<path d="M1530.6,834.0 h8.33 M1534.8,829.8 v8.33"/>
<path d="M1731.6,834.0 h8.33 M1735.8,829.8 v8.33"/>
<path d="M1765.8,834.0 h8.33 M1770.0,829.8 v8.33"/>
<path d="M171.6,818.0 h8.33 M175.8,813.8 v8.33"/>
<path d="M255.5,818.0 h8.33 M259.7,813.8 v8.33"/>
<path d="M322.8,818.0 h8.33 M327.0,813.8 v8.33"/>
<path d="M436.6,818.0 h8.33 M440.8,813.8 v8.33"/>
<path d="M598.8,818.0 h8.33 M603.0,813.8 v8.33"/>
<path d="M716.6,818.0 h8.33 M720.8,813.8 v8.33"/>
<path d="M792.5,818.0 h8.33 M796.7,813.8 v8.33"/>
<path d="M938.6,818.0 h8.33 M942.8,813.8 v8.33"/>
<path d="M1005.8,818.0 h8.33 M1010.0,813.8 v8.33"/>
<path d="M1152.5,818.0 h8.33 M1156.7,813.8 v8.33"/>
<path d="M1250.8,818.0 h8.33 M1255.0,813.8 v8.33"/>
<path d="M1299.6,818.0 h8.33 M1303.8,813.8 v8.33"/>
<path d="M1348.6,818.0 h8.33 M1352.8,813.8 v8.33"/>
<path d="M1402.5,818.0 h8.33 M1406.7,813.8 v8.33"/>
<path d="M1466.6,818.0 h8.33 M1470.8,813.8 v8.33"/>
<path d="M1554.7,818.0 h8.33 M1558.9,813.8 v8.33"/>
<path d="M173.6,801.7 h8.33 M177.8,797.5 v8.33"/>
<path d="M377.6,801.7 h8.33 M381.8,797.5 v8.33"/>
<path d="M544.6,801.7 h8.33 M548.8,797.5 v8.33"/>
<path d="M681.6,801.7 h8.33 M685.8,797.5 v8.33"/>
<path d="M740.5,801.7 h8.33 M744.7,797.5 v8.33"/>
<path d="M1074.6,801.7 h8.33 M1078.8,797.5 v8.33"/>
<path d="M1216.8,801.7 h8.33 M1221.0,797.5 v8.33"/>
<path d="M1304.6,801.7 h8.33 M1308.8,797.5 v8.33"/>
<path d="M1466.6,801.7 h8.33 M1470.8,797.5 v8.33"/>
<path d="M1559.5,801.7 h8.33 M1563.7,797.5 v8.33"/>
<path d="M201.6,785.0 h8.33 M205.8,780.8 v8.33"/>
<path d="M399.6,785.0 h8.33 M403.8,780.8 v8.33"/>
<path d="M524.6,785.0 h8.33 M528.8,780.8 v8.33"/>
<path d="M638.5,785.0 h8.33 M642.7,780.8 v8.33"/>
<path d="M814.6,785.0 h8.33 M818.8,780.8 v8.33"/>
<path d="M958.6,785.0 h8.33 M962.8,780.8 v8.33"/>
<path d="M1039.6,785.0 h8.33 M1043.8,780.8 v8.33"/>
<path d="M1187.5,785.0 h8.33 M1191.7,780.8 v8.33"/>
<path d="M1250.8,785.0 h8.33 M1255.0,780.8 v8.33"/>
<path d="M1324.6,785.0 h8.33 M1328.8,780.8 v8.33"/>
<path d="M1402.8,785.0 h8.33 M1407.0,780.8 v8.33"/>
<path d="M1545.5,785.0 h8.33 M1549.7,780.8 v8.33"/>
<path d="M355.8,769.0 h8.33 M360.0,764.8 v8.33"/>
<path d="M425.5,769.0 h8.33 M429.7,764.8 v8.33"/>
<path d="M475.5,769.0 h8.33 M479.7,764.8 v8.33"/>
<path d="M534.5,769.0 h8.33 M538.7,764.8 v8.33"/>
<path d="M570.5,769.0 h8.33 M574.7,764.8 v8.33"/>
<path d="M630.8,769.0 h8.33 M635.0,764.8 v8.33"/>
<path d="M973.8,769.0 h8.33 M978.0,764.8 v8.33"/>
<path d="M1069.5,769.0 h8.33 M1073.7,764.8 v8.33"/>
<path d="M1108.6,769.0 h8.33 M1112.8,764.8 v8.33"/>
<path d="M1177.8,769.0 h8.33 M1182.0,764.8 v8.33"/>
<path d="M1255.8,769.0 h8.33 M1260.0,764.8 v8.33"/>
<path d="M1466.6,769.0 h8.33 M1470.8,764.8 v8.33"/>
<path d="M426.6,752.0 h8.33 M430.8,747.8 v8.33"/>
<path d="M539.5,752.0 h8.33 M543.7,747.8 v8.33"/>
<path d="M573.8,752.0 h8.33 M578.0,747.8 v8.33"/>
<path d="M703.8,752.0 h8.33 M708.0,747.8 v8.33"/>
<path d="M1093.6,752.0 h8.33 M1097.8,747.8 v8.33"/>
<path d="M1270.8,752.0 h8.33 M1275.0,747.8 v8.33"/>
<path d="M1476.6,752.0 h8.33 M1480.8,747.8 v8.33"/>
<path d="M436.6,736.0 h8.33 M440.8,731.8 v8.33"/>
<path d="M630.5,736.0 h8.33 M634.7,731.8 v8.33"/>
<path d="M1038.6,736.0 h8.33 M1042.8,731.8 v8.33"/>
<path d="M1167.8,736.0 h8.33 M1172.0,731.8 v8.33"/>
<path d="M1274.6,736.0 h8.33 M1278.8,731.8 v8.33"/>
<path d="M1496.6,736.0 h8.33 M1500.8,731.8 v8.33"/>
<path d="M598.6,720.0 h8.33 M602.8,715.8 v8.33"/>
<path d="M726.6,720.0 h8.33 M730.8,715.8 v8.33"/>
<path d="M1187.8,720.0 h8.33 M1192.0,715.8 v8.33"/>
<path d="M1270.8,720.0 h8.33 M1275.0,715.8 v8.33"/>
<path d="M686.6,703.0 h8.33 M690.8,698.8 v8.33"/>
<path d="M1101.8,703.0 h8.33 M1106.0,698.8 v8.33"/>
<path d="M1206.6,703.0 h8.33 M1210.8,698.8 v8.33"/>
<path d="M1299.6,703.0 h8.33 M1303.8,698.8 v8.33"/>
<path d="M1118.6,687.0 h8.33 M1122.8,682.8 v8.33"/>
</g>
<rect x="19.5" y="641.6" width="1766.3" height="200.9" fill="none" stroke="#fff" stroke-width="1.11"/>
<g stroke="#fff" stroke-width="1.11">
<path d="M19.5,842.5 v5.3"/>
<path d="M265.5,842.5 v5.3"/>
<path d="M510.5,842.5 v5.3"/>
<path d="M755.5,842.5 v5.3"/>
<path d="M1000.5,842.5 v5.3"/>
<path d="M1246.5,842.5 v5.3"/>
<path d="M1491.5,842.5 v5.3"/>
<path d="M1736.5,842.5 v5.3"/>
</g>
<g font-family="'DejaVu Sans','Liberation Sans',sans-serif" font-size="13.889" fill="#fff" text-anchor="middle">
<text x="19.5" y="861.7" letter-spacing="-0.6">0</text>
<text x="264.5" y="861.7" letter-spacing="-0.6">50</text>
<text x="509.5" y="861.7" letter-spacing="-0.6">100</text>
<text x="754.7" y="861.7" letter-spacing="-0.6">150</text>
<text x="1000.0" y="861.7" letter-spacing="-0.6">200</text>
<text x="1245.3" y="861.7" letter-spacing="-0.6">250</text>
<text x="1490.6" y="861.7" letter-spacing="-0.6">300</text>
<text x="1735.9" y="861.7" letter-spacing="-0.6">350</text>
<text x="902.5" y="881.5">Solar longitude (deg)</text>
</g>
</svg>
</body></html>
